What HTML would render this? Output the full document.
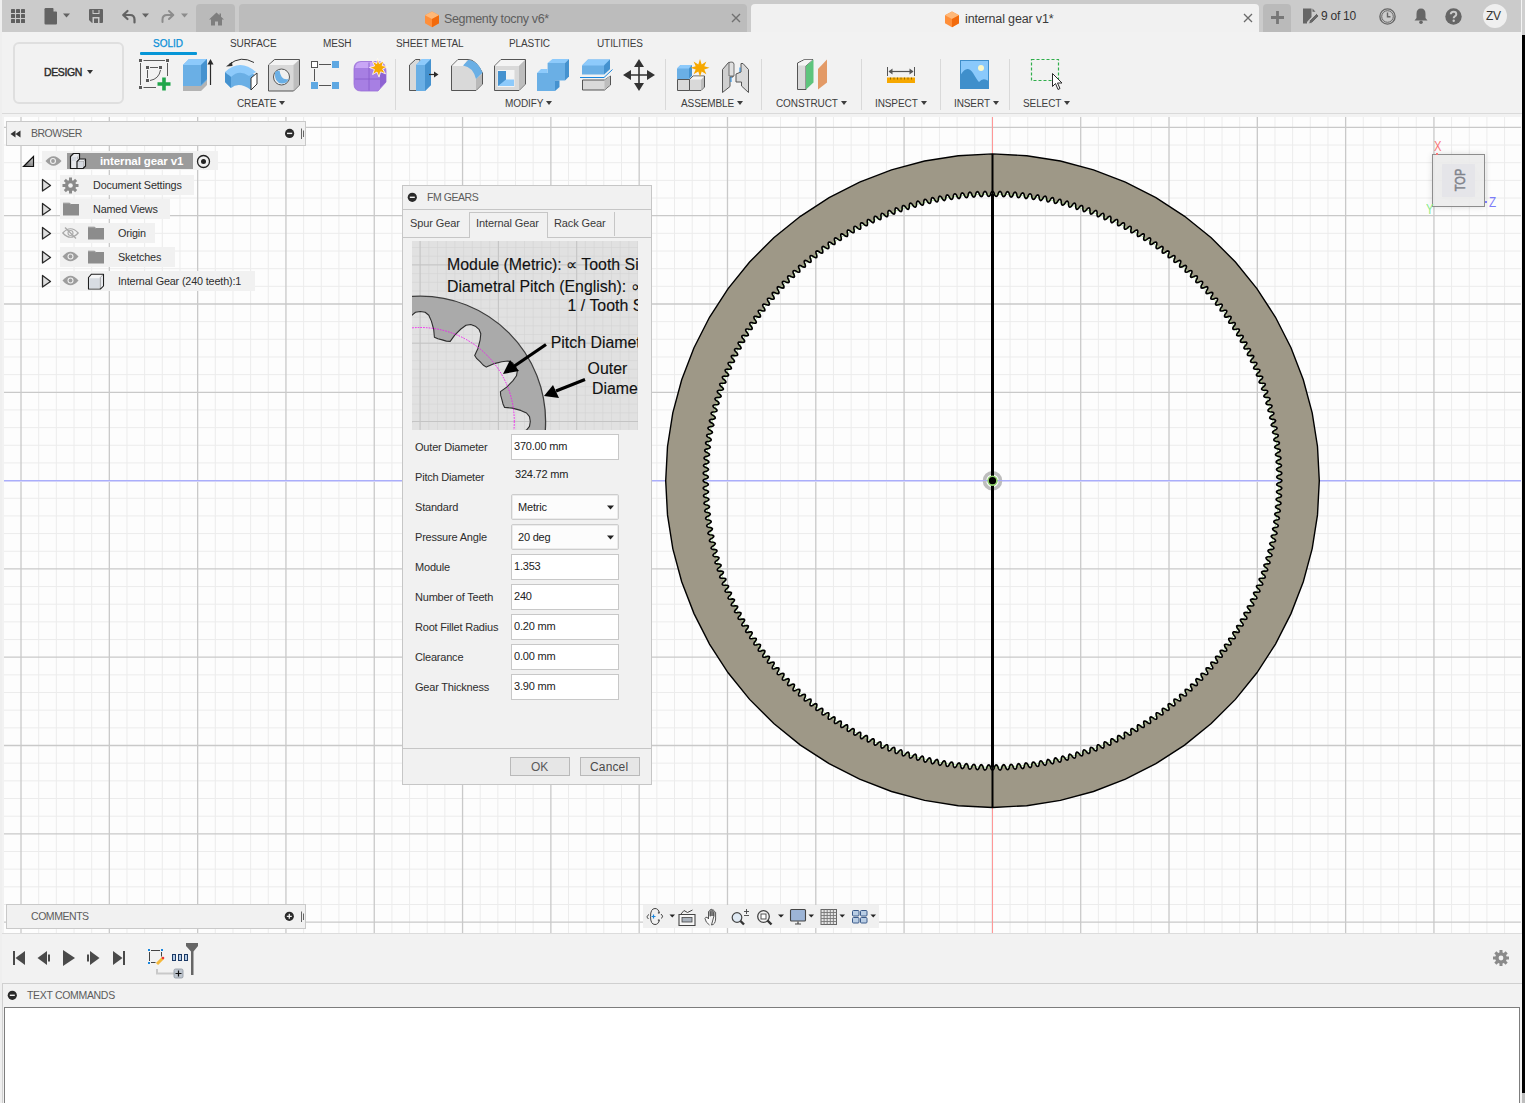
<!DOCTYPE html>
<html><head><meta charset="utf-8">
<style>
*{box-sizing:border-box}
html,body{margin:0;padding:0}
body{width:1525px;height:1103px;position:relative;overflow:hidden;background:#f2f2f2;font-family:"Liberation Sans",sans-serif;color:#3c3c3c}
.a{position:absolute}
.t{position:absolute;white-space:nowrap;line-height:1}
svg{display:block}
.tab{position:absolute;top:4px;height:28px;border-radius:4px 4px 0 0}
.lbl{position:absolute;white-space:nowrap;font-size:10px;line-height:12px;color:#3d3d3d}
.sep{position:absolute;top:59px;width:1px;height:51px;background:#d9d9d9}
.tri{display:inline-block;width:0;height:0;border-left:3.5px solid transparent;border-right:3.5px solid transparent;border-top:4px solid #3d3d3d;vertical-align:middle;margin-left:3px;position:relative;top:-1px}
</style></head><body>
<!-- viewport -->
<svg width="1517" height="816" viewBox="4 117 1517 816" style="position:absolute;left:4px;top:117px;display:block">
<rect x="4" y="117" width="1517" height="816" fill="#fdfdfd"/>
<path d="M38.68 117V933M56.35 117V933M74.01 117V933M91.67 117V933M126.99 117V933M144.65 117V933M162.31 117V933M179.98 117V933M215.3 117V933M232.96 117V933M250.62 117V933M268.28 117V933M303.61 117V933M321.27 117V933M338.93 117V933M356.59 117V933M391.91 117V933M409.57 117V933M427.24 117V933M444.9 117V933M480.22 117V933M497.88 117V933M515.54 117V933M533.2 117V933M568.53 117V933M586.19 117V933M603.85 117V933M621.51 117V933M656.83 117V933M4 145.03H1521M674.49 117V933M4 162.69H1521M692.16 117V933M4 180.36H1521M709.82 117V933M4 198.02H1521M745.14 117V933M4 233.34H1521M762.8 117V933M4 251.0H1521M780.46 117V933M4 268.66H1521M798.12 117V933M4 286.32H1521M833.45 117V933M4 321.65H1521M851.11 117V933M4 339.31H1521M868.77 117V933M4 356.97H1521M886.43 117V933M4 374.63H1521M921.75 117V933M4 409.95H1521M939.42 117V933M4 427.62H1521M957.08 117V933M4 445.28H1521M974.74 117V933M4 462.94H1521M1010.06 117V933M4 498.26H1521M1027.72 117V933M4 515.92H1521M1045.38 117V933M4 533.58H1521M1063.05 117V933M4 551.25H1521M1098.37 117V933M4 586.57H1521M1116.03 117V933M4 604.23H1521M1133.69 117V933M4 621.89H1521M1151.35 117V933M4 639.55H1521M1186.68 117V933M4 674.88H1521M1204.34 117V933M4 692.54H1521M1222.0 117V933M4 710.2H1521M1239.66 117V933M4 727.86H1521M1274.98 117V933M4 763.18H1521M1292.64 117V933M4 780.84H1521M1310.31 117V933M4 798.51H1521M1327.97 117V933M4 816.17H1521M1363.29 117V933M4 851.49H1521M1380.95 117V933M4 869.15H1521M1398.61 117V933M4 886.81H1521M1416.27 117V933M4 904.47H1521M1451.6 117V933M1469.26 117V933M1486.92 117V933M1504.58 117V933" stroke="#ececec" stroke-width="1" fill="none"/>
<path d="M21.02 117V933M109.33 117V933M197.64 117V933M285.94 117V933M374.25 117V933M462.56 117V933M550.87 117V933M639.17 117V933M4 127.37H1521M727.48 117V933M4 215.68H1521M815.79 117V933M4 303.99H1521M904.09 117V933M4 392.29H1521M992.4 117V933M4 480.6H1521M1080.71 117V933M4 568.91H1521M1169.01 117V933M4 657.21H1521M1257.32 117V933M4 745.52H1521M1345.63 117V933M4 833.83H1521M1433.93 117V933M4 922.13H1521" stroke="#c9c9c9" stroke-width="1.3" fill="none"/>
<path d="M4 480.5H1521" stroke="#aaaefb" stroke-width="1"/>
<path d="M4 481.5H1521" stroke="#d3d3f9" stroke-width="1"/>
<path d="M992.5 117V933" stroke="#ff9797" stroke-width="1"/>
</svg>
<svg width="1517" height="816" viewBox="4 117 1517 816" style="position:absolute;left:4px;top:117px;display:block">
<path d="M992.5 153.9L1026.7 155.7L1060.4 161.0L1093.5 169.9L1125.4 182.2L1155.9 197.7L1184.6 216.3L1211.2 237.8L1235.4 262.0L1256.9 288.6L1275.5 317.3L1291.0 347.8L1303.3 379.7L1312.2 412.8L1317.5 446.5L1319.3 480.7L1317.5 514.9L1312.2 548.6L1303.3 581.7L1291.0 613.6L1275.5 644.1L1256.9 672.8L1235.4 699.4L1211.2 723.6L1184.6 745.1L1155.9 763.7L1125.4 779.2L1093.5 791.5L1060.4 800.4L1026.7 805.7L992.5 807.5L958.3 805.7L924.6 800.4L891.5 791.5L859.6 779.2L829.1 763.7L800.4 745.1L773.8 723.6L749.6 699.4L728.1 672.8L709.5 644.1L694.0 613.6L681.7 581.7L672.8 548.6L667.5 514.9L665.7 480.7L667.5 446.5L672.8 412.8L681.7 379.7L694.0 347.8L709.5 317.3L728.1 288.6L749.6 262.0L773.8 237.8L800.4 216.3L829.1 197.7L859.6 182.2L891.5 169.9L924.6 161.0L958.3 155.7ZM992.5 191.3L993.3 191.7L994.0 192.8L994.7 195.1L995.5 196.2L996.2 196.5L997.0 196.2L997.7 195.1L998.5 192.8L999.3 191.7L1000.1 191.4L1000.8 191.8L1001.5 192.9L1002.2 195.2L1002.9 196.3L1003.7 196.7L1004.4 196.4L1005.2 195.3L1006.1 193.1L1006.9 192.0L1007.6 191.7L1008.4 192.1L1009.1 193.2L1009.7 195.6L1010.4 196.7L1011.1 197.1L1011.9 196.8L1012.7 195.8L1013.6 193.5L1014.4 192.5L1015.2 192.2L1015.9 192.6L1016.6 193.8L1017.1 196.1L1017.8 197.3L1018.5 197.7L1019.3 197.4L1020.1 196.4L1021.1 194.2L1022.0 193.2L1022.8 192.9L1023.5 193.3L1024.1 194.5L1024.6 196.9L1025.2 198.0L1025.9 198.5L1026.7 198.2L1027.6 197.2L1028.6 195.0L1029.5 194.0L1030.3 193.8L1031.0 194.2L1031.6 195.4L1032.0 197.8L1032.6 199.0L1033.3 199.4L1034.1 199.2L1035.0 198.2L1036.1 196.1L1037.0 195.1L1037.8 194.9L1038.5 195.3L1039.0 196.5L1039.4 198.9L1040.0 200.1L1040.6 200.6L1041.4 200.4L1042.3 199.4L1043.5 197.3L1044.4 196.4L1045.2 196.1L1045.9 196.6L1046.5 197.9L1046.8 200.2L1047.3 201.5L1047.9 202.0L1048.7 201.8L1049.7 200.8L1050.9 198.7L1051.9 197.8L1052.7 197.6L1053.3 198.1L1053.8 199.4L1054.1 201.8L1054.6 203.0L1055.2 203.5L1056.0 203.3L1057.0 202.4L1058.3 200.4L1059.2 199.5L1060.1 199.3L1060.7 199.8L1061.2 201.1L1061.4 203.5L1061.8 204.7L1062.5 205.2L1063.3 205.1L1064.3 204.2L1065.6 202.2L1066.6 201.3L1067.4 201.2L1068.0 201.7L1068.5 203.0L1068.6 205.4L1069.0 206.6L1069.6 207.2L1070.5 207.0L1071.5 206.2L1072.8 204.2L1073.9 203.3L1074.7 203.2L1075.3 203.8L1075.7 205.0L1075.8 207.5L1076.2 208.7L1076.8 209.3L1077.6 209.2L1078.6 208.3L1080.0 206.4L1081.1 205.6L1081.9 205.5L1082.5 206.0L1082.9 207.3L1082.9 209.7L1083.3 211.0L1083.9 211.6L1084.7 211.5L1085.7 210.7L1087.2 208.8L1088.3 208.0L1089.1 207.9L1089.7 208.5L1090.0 209.8L1090.0 212.2L1090.3 213.5L1090.9 214.1L1091.7 214.0L1092.8 213.2L1094.3 211.3L1095.4 210.6L1096.2 210.5L1096.8 211.1L1097.1 212.4L1097.0 214.8L1097.3 216.1L1097.8 216.7L1098.6 216.7L1099.7 215.9L1101.3 214.1L1102.4 213.4L1103.2 213.3L1103.8 214.0L1104.1 215.3L1103.9 217.7L1104.1 219.0L1104.7 219.6L1105.5 219.5L1106.6 218.8L1108.2 217.0L1109.4 216.3L1110.2 216.3L1110.8 217.0L1111.0 218.3L1110.7 220.7L1111.0 222.0L1111.5 222.6L1112.3 222.6L1113.4 221.9L1115.1 220.2L1116.3 219.5L1117.1 219.5L1117.6 220.1L1117.8 221.5L1117.5 223.8L1117.7 225.2L1118.2 225.8L1119.0 225.8L1120.2 225.2L1121.9 223.5L1123.0 222.8L1123.9 222.8L1124.4 223.5L1124.6 224.8L1124.2 227.2L1124.3 228.5L1124.8 229.2L1125.7 229.2L1126.8 228.6L1128.6 226.9L1129.8 226.3L1130.6 226.4L1131.1 227.0L1131.2 228.4L1130.8 230.7L1130.9 232.1L1131.4 232.7L1132.2 232.8L1133.4 232.2L1135.2 230.6L1136.4 230.0L1137.2 230.1L1137.7 230.8L1137.8 232.1L1137.3 234.4L1137.4 235.8L1137.8 236.5L1138.6 236.5L1139.8 236.0L1141.7 234.4L1142.9 233.9L1143.7 233.9L1144.2 234.6L1144.2 236.0L1143.7 238.3L1143.7 239.6L1144.2 240.3L1145.0 240.4L1146.2 239.9L1148.1 238.4L1149.3 237.9L1150.1 238.0L1150.6 238.7L1150.6 240.0L1150.0 242.4L1150.0 243.7L1150.4 244.4L1151.2 244.5L1152.4 244.0L1154.3 242.5L1155.6 242.1L1156.4 242.2L1156.8 242.9L1156.8 244.3L1156.1 246.6L1156.1 247.9L1156.5 248.6L1157.3 248.7L1158.6 248.3L1160.5 246.9L1161.8 246.4L1162.6 246.6L1163.0 247.3L1163.0 248.6L1162.2 250.9L1162.2 252.3L1162.5 253.0L1163.4 253.1L1164.6 252.7L1166.6 251.3L1167.9 250.9L1168.7 251.1L1169.1 251.8L1169.0 253.2L1168.2 255.4L1168.1 256.8L1168.4 257.5L1169.3 257.7L1170.5 257.3L1172.5 256.0L1173.8 255.6L1174.6 255.8L1175.0 256.5L1174.9 257.9L1174.0 260.1L1173.9 261.4L1174.2 262.2L1175.0 262.4L1176.3 262.0L1178.4 260.8L1179.6 260.4L1180.5 260.6L1180.8 261.4L1180.6 262.7L1179.7 264.9L1179.6 266.3L1179.9 267.0L1180.7 267.2L1182.0 266.9L1184.0 265.7L1185.3 265.4L1186.1 265.6L1186.5 266.4L1186.3 267.7L1185.3 269.9L1185.1 271.2L1185.4 272.0L1186.2 272.2L1187.5 272.0L1189.6 270.8L1190.9 270.5L1191.7 270.8L1192.0 271.6L1191.8 272.9L1190.8 275.0L1190.5 276.4L1190.8 277.1L1191.6 277.4L1192.9 277.1L1195.0 276.0L1196.3 275.8L1197.1 276.1L1197.4 276.9L1197.2 278.2L1196.1 280.3L1195.8 281.6L1196.1 282.4L1196.8 282.7L1198.2 282.4L1200.3 281.4L1201.6 281.2L1202.4 281.5L1202.7 282.3L1202.4 283.6L1201.2 285.7L1201.0 287.0L1201.2 287.8L1202.0 288.1L1203.3 287.9L1205.5 286.9L1206.8 286.7L1207.6 287.1L1207.8 287.9L1207.5 289.2L1206.3 291.2L1206.0 292.5L1206.2 293.3L1206.9 293.6L1208.3 293.5L1210.5 292.6L1211.8 292.4L1212.6 292.7L1212.8 293.6L1212.4 294.8L1211.2 296.9L1210.8 298.2L1211.0 299.0L1211.8 299.3L1213.1 299.2L1215.3 298.3L1216.7 298.2L1217.4 298.6L1217.6 299.4L1217.2 300.7L1215.9 302.7L1215.5 303.9L1215.7 304.8L1216.4 305.1L1217.8 305.0L1220.0 304.2L1221.4 304.1L1222.1 304.5L1222.3 305.3L1221.9 306.6L1220.5 308.6L1220.1 309.8L1220.2 310.7L1220.9 311.0L1222.3 311.0L1224.6 310.2L1225.9 310.2L1226.6 310.6L1226.8 311.4L1226.3 312.7L1224.9 314.6L1224.5 315.9L1224.6 316.7L1225.3 317.1L1226.6 317.1L1228.9 316.4L1230.3 316.4L1231.0 316.8L1231.1 317.6L1230.7 318.9L1229.2 320.8L1228.7 322.0L1228.8 322.8L1229.5 323.2L1230.8 323.2L1233.2 322.6L1234.5 322.6L1235.2 323.1L1235.3 323.9L1234.8 325.1L1233.3 327.0L1232.8 328.2L1232.9 329.0L1233.6 329.5L1234.9 329.5L1237.2 329.0L1238.6 329.0L1239.3 329.5L1239.3 330.3L1238.8 331.5L1237.2 333.4L1236.7 334.6L1236.7 335.4L1237.4 335.8L1238.8 335.9L1241.1 335.4L1242.4 335.5L1243.1 336.0L1243.2 336.8L1242.6 338.0L1241.0 339.8L1240.4 341.0L1240.5 341.8L1241.1 342.3L1242.5 342.4L1244.8 342.0L1246.2 342.1L1246.8 342.6L1246.9 343.4L1246.3 344.6L1244.6 346.4L1244.0 347.5L1244.0 348.4L1244.7 348.9L1246.0 349.0L1248.4 348.6L1249.7 348.8L1250.4 349.3L1250.4 350.2L1249.7 351.3L1248.0 353.0L1247.4 354.2L1247.4 355.0L1248.0 355.5L1249.4 355.7L1251.7 355.4L1253.1 355.6L1253.7 356.1L1253.7 356.9L1253.0 358.1L1251.3 359.8L1250.6 360.9L1250.6 361.7L1251.2 362.2L1252.5 362.5L1254.9 362.2L1256.2 362.4L1256.9 363.0L1256.9 363.8L1256.2 365.0L1254.4 366.6L1253.7 367.7L1253.6 368.5L1254.2 369.1L1255.5 369.3L1257.9 369.1L1259.2 369.4L1259.9 370.0L1259.8 370.8L1259.1 371.9L1257.3 373.5L1256.5 374.6L1256.5 375.4L1257.1 375.9L1258.4 376.2L1260.8 376.1L1262.1 376.4L1262.7 377.0L1262.6 377.8L1261.9 378.9L1260.0 380.4L1259.2 381.5L1259.1 382.3L1259.7 382.9L1261.0 383.2L1263.4 383.2L1264.7 383.5L1265.3 384.1L1265.2 384.9L1264.4 386.0L1262.5 387.5L1261.7 388.5L1261.6 389.3L1262.2 389.9L1263.5 390.3L1265.9 390.3L1267.2 390.7L1267.7 391.3L1267.6 392.1L1266.8 393.2L1264.9 394.6L1264.0 395.6L1263.9 396.4L1264.5 397.0L1265.7 397.4L1268.2 397.5L1269.4 397.9L1270.0 398.5L1269.9 399.3L1269.0 400.4L1267.0 401.7L1266.2 402.7L1266.0 403.6L1266.6 404.2L1267.8 404.6L1270.2 404.7L1271.5 405.2L1272.0 405.8L1271.9 406.6L1271.0 407.6L1269.0 408.9L1268.1 409.9L1268.0 410.7L1268.5 411.4L1269.7 411.8L1272.1 412.0L1273.4 412.5L1273.9 413.1L1273.7 414.0L1272.8 414.9L1270.8 416.2L1269.9 417.2L1269.7 418.0L1270.2 418.6L1271.4 419.1L1273.8 419.4L1275.1 419.9L1275.6 420.5L1275.4 421.3L1274.5 422.3L1272.4 423.5L1271.4 424.5L1271.2 425.3L1271.7 425.9L1273.0 426.4L1275.3 426.7L1276.6 427.3L1277.1 428.0L1276.8 428.8L1275.9 429.7L1273.8 430.9L1272.8 431.8L1272.6 432.6L1273.1 433.2L1274.3 433.8L1276.7 434.2L1277.9 434.7L1278.3 435.4L1278.1 436.2L1277.1 437.1L1275.0 438.2L1274.0 439.1L1273.8 439.9L1274.2 440.6L1275.4 441.2L1277.8 441.6L1279.0 442.2L1279.4 442.9L1279.2 443.7L1278.2 444.6L1276.0 445.6L1275.0 446.5L1274.7 447.3L1275.2 448.0L1276.3 448.6L1278.7 449.1L1279.9 449.7L1280.3 450.4L1280.0 451.2L1279.0 452.1L1276.8 453.1L1275.8 453.9L1275.5 454.7L1275.9 455.4L1277.1 456.1L1279.4 456.6L1280.6 457.3L1281.0 458.0L1280.7 458.8L1279.7 459.6L1277.4 460.5L1276.4 461.3L1276.1 462.1L1276.5 462.8L1277.6 463.5L1280.0 464.1L1281.1 464.8L1281.5 465.6L1281.2 466.3L1280.1 467.1L1277.9 468.0L1276.8 468.8L1276.5 469.5L1276.9 470.3L1278.0 471.0L1280.3 471.7L1281.4 472.4L1281.8 473.1L1281.5 473.9L1280.4 474.7L1278.1 475.5L1277.0 476.2L1276.7 477.0L1277.0 477.7L1278.1 478.5L1280.4 479.2L1281.5 479.9L1281.9 480.7L1281.5 481.5L1280.4 482.2L1278.1 482.9L1277.0 483.7L1276.7 484.4L1277.0 485.2L1278.1 485.9L1280.4 486.7L1281.5 487.5L1281.8 488.3L1281.4 489.0L1280.3 489.7L1278.0 490.4L1276.9 491.1L1276.5 491.9L1276.8 492.6L1277.9 493.4L1280.1 494.3L1281.2 495.1L1281.5 495.8L1281.1 496.6L1280.0 497.3L1277.6 497.9L1276.5 498.6L1276.1 499.3L1276.4 500.1L1277.4 500.9L1279.7 501.8L1280.7 502.6L1281.0 503.4L1280.6 504.1L1279.4 504.8L1277.1 505.3L1275.9 506.0L1275.5 506.7L1275.8 507.5L1276.8 508.3L1279.0 509.3L1280.0 510.2L1280.3 511.0L1279.9 511.7L1278.7 512.3L1276.3 512.8L1275.2 513.4L1274.7 514.1L1275.0 514.9L1276.0 515.8L1278.2 516.8L1279.2 517.7L1279.4 518.5L1279.0 519.2L1277.8 519.8L1275.4 520.2L1274.2 520.8L1273.8 521.5L1274.0 522.3L1275.0 523.2L1277.1 524.3L1278.1 525.2L1278.3 526.0L1277.9 526.7L1276.7 527.2L1274.3 527.6L1273.1 528.2L1272.6 528.8L1272.8 529.6L1273.8 530.5L1275.9 531.7L1276.8 532.6L1277.1 533.4L1276.6 534.1L1275.3 534.7L1273.0 535.0L1271.7 535.5L1271.2 536.1L1271.4 536.9L1272.4 537.9L1274.5 539.1L1275.4 540.1L1275.6 540.9L1275.1 541.5L1273.8 542.0L1271.4 542.3L1270.2 542.8L1269.7 543.4L1269.9 544.2L1270.8 545.2L1272.8 546.5L1273.7 547.4L1273.9 548.3L1273.4 548.9L1272.1 549.4L1269.7 549.6L1268.5 550.0L1268.0 550.7L1268.1 551.5L1269.0 552.5L1271.0 553.8L1271.9 554.8L1272.0 555.6L1271.5 556.2L1270.2 556.7L1267.8 556.8L1266.6 557.2L1266.0 557.8L1266.2 558.7L1267.0 559.7L1269.0 561.0L1269.9 562.1L1270.0 562.9L1269.4 563.5L1268.2 563.9L1265.7 564.0L1264.5 564.4L1263.9 565.0L1264.0 565.8L1264.9 566.8L1266.8 568.2L1267.6 569.3L1267.7 570.1L1267.2 570.7L1265.9 571.1L1263.5 571.1L1262.2 571.5L1261.6 572.1L1261.7 572.9L1262.5 573.9L1264.4 575.4L1265.2 576.5L1265.3 577.3L1264.7 577.9L1263.4 578.2L1261.0 578.2L1259.7 578.5L1259.1 579.1L1259.2 579.9L1260.0 581.0L1261.9 582.5L1262.6 583.6L1262.7 584.4L1262.1 585.0L1260.8 585.3L1258.4 585.2L1257.1 585.5L1256.5 586.0L1256.5 586.8L1257.3 587.9L1259.1 589.5L1259.8 590.6L1259.9 591.4L1259.2 592.0L1257.9 592.3L1255.5 592.1L1254.2 592.3L1253.6 592.9L1253.7 593.7L1254.4 594.8L1256.2 596.4L1256.9 597.6L1256.9 598.4L1256.2 599.0L1254.9 599.2L1252.5 598.9L1251.2 599.2L1250.6 599.7L1250.6 600.5L1251.3 601.6L1253.0 603.3L1253.7 604.5L1253.7 605.3L1253.1 605.8L1251.7 606.0L1249.4 605.7L1248.0 605.9L1247.4 606.4L1247.4 607.2L1248.0 608.4L1249.7 610.1L1250.4 611.2L1250.4 612.1L1249.7 612.6L1248.4 612.8L1246.0 612.4L1244.7 612.5L1244.0 613.0L1244.0 613.9L1244.6 615.0L1246.3 616.8L1246.9 618.0L1246.8 618.8L1246.2 619.3L1244.8 619.4L1242.5 619.0L1241.1 619.1L1240.5 619.6L1240.4 620.4L1241.0 621.6L1242.6 623.4L1243.2 624.6L1243.1 625.4L1242.4 625.9L1241.1 626.0L1238.8 625.5L1237.4 625.6L1236.7 626.0L1236.7 626.8L1237.2 628.0L1238.8 629.9L1239.3 631.1L1239.3 631.9L1238.6 632.4L1237.2 632.4L1234.9 631.9L1233.6 631.9L1232.9 632.4L1232.8 633.2L1233.3 634.4L1234.8 636.3L1235.3 637.5L1235.2 638.3L1234.5 638.8L1233.2 638.8L1230.8 638.2L1229.5 638.2L1228.8 638.6L1228.7 639.4L1229.2 640.6L1230.7 642.5L1231.1 643.8L1231.0 644.6L1230.3 645.0L1228.9 645.0L1226.6 644.3L1225.3 644.3L1224.6 644.7L1224.5 645.5L1224.9 646.8L1226.3 648.7L1226.8 650.0L1226.6 650.8L1225.9 651.2L1224.6 651.2L1222.3 650.4L1220.9 650.4L1220.2 650.7L1220.1 651.6L1220.5 652.8L1221.9 654.8L1222.3 656.1L1222.1 656.9L1221.4 657.3L1220.0 657.2L1217.8 656.4L1216.4 656.3L1215.7 656.6L1215.5 657.5L1215.9 658.7L1217.2 660.7L1217.6 662.0L1217.4 662.8L1216.7 663.2L1215.3 663.1L1213.1 662.2L1211.8 662.1L1211.0 662.4L1210.8 663.2L1211.2 664.5L1212.4 666.6L1212.8 667.8L1212.6 668.7L1211.8 669.0L1210.5 668.8L1208.3 667.9L1206.9 667.8L1206.2 668.1L1206.0 668.9L1206.3 670.2L1207.5 672.2L1207.8 673.5L1207.6 674.3L1206.8 674.7L1205.5 674.5L1203.3 673.5L1202.0 673.3L1201.2 673.6L1201.0 674.4L1201.2 675.7L1202.4 677.8L1202.7 679.1L1202.4 679.9L1201.6 680.2L1200.3 680.0L1198.2 679.0L1196.8 678.7L1196.1 679.0L1195.8 679.8L1196.1 681.1L1197.2 683.2L1197.4 684.5L1197.1 685.3L1196.3 685.6L1195.0 685.4L1192.9 684.3L1191.6 684.0L1190.8 684.3L1190.5 685.0L1190.8 686.4L1191.8 688.5L1192.0 689.8L1191.7 690.6L1190.9 690.9L1189.6 690.6L1187.5 689.4L1186.2 689.2L1185.4 689.4L1185.1 690.2L1185.3 691.5L1186.3 693.7L1186.5 695.0L1186.1 695.8L1185.3 696.0L1184.0 695.7L1182.0 694.5L1180.7 694.2L1179.9 694.4L1179.6 695.1L1179.7 696.5L1180.6 698.7L1180.8 700.0L1180.5 700.8L1179.6 701.0L1178.4 700.6L1176.3 699.4L1175.0 699.0L1174.2 699.2L1173.9 700.0L1174.0 701.3L1174.9 703.5L1175.0 704.9L1174.6 705.6L1173.8 705.8L1172.5 705.4L1170.5 704.1L1169.3 703.7L1168.4 703.9L1168.1 704.6L1168.2 706.0L1169.0 708.2L1169.1 709.6L1168.7 710.3L1167.9 710.5L1166.6 710.1L1164.6 708.7L1163.4 708.3L1162.5 708.4L1162.2 709.1L1162.2 710.5L1163.0 712.8L1163.0 714.1L1162.6 714.8L1161.8 715.0L1160.5 714.5L1158.6 713.1L1157.3 712.7L1156.5 712.8L1156.1 713.5L1156.1 714.8L1156.8 717.1L1156.8 718.5L1156.4 719.2L1155.6 719.3L1154.3 718.9L1152.4 717.4L1151.2 716.9L1150.4 717.0L1150.0 717.7L1150.0 719.0L1150.6 721.4L1150.6 722.7L1150.1 723.4L1149.3 723.5L1148.1 723.0L1146.2 721.5L1145.0 721.0L1144.2 721.1L1143.7 721.8L1143.7 723.1L1144.2 725.4L1144.2 726.8L1143.7 727.5L1142.9 727.5L1141.7 727.0L1139.8 725.4L1138.6 724.9L1137.8 724.9L1137.4 725.6L1137.3 727.0L1137.8 729.3L1137.7 730.6L1137.2 731.3L1136.4 731.4L1135.2 730.8L1133.4 729.2L1132.2 728.6L1131.4 728.7L1130.9 729.3L1130.8 730.7L1131.2 733.0L1131.1 734.4L1130.6 735.0L1129.8 735.1L1128.6 734.5L1126.8 732.8L1125.7 732.2L1124.8 732.2L1124.3 732.9L1124.2 734.2L1124.6 736.6L1124.4 737.9L1123.9 738.6L1123.0 738.6L1121.9 737.9L1120.2 736.2L1119.0 735.6L1118.2 735.6L1117.7 736.2L1117.5 737.6L1117.8 739.9L1117.6 741.3L1117.1 741.9L1116.3 741.9L1115.1 741.2L1113.4 739.5L1112.3 738.8L1111.5 738.8L1111.0 739.4L1110.7 740.7L1111.0 743.1L1110.8 744.4L1110.2 745.1L1109.4 745.1L1108.2 744.4L1106.6 742.6L1105.5 741.9L1104.7 741.8L1104.1 742.4L1103.9 743.7L1104.1 746.1L1103.8 747.4L1103.2 748.1L1102.4 748.0L1101.3 747.3L1099.7 745.5L1098.6 744.7L1097.8 744.7L1097.3 745.3L1097.0 746.6L1097.1 749.0L1096.8 750.3L1096.2 750.9L1095.4 750.8L1094.3 750.1L1092.8 748.2L1091.7 747.4L1090.9 747.3L1090.3 747.9L1090.0 749.2L1090.0 751.6L1089.7 752.9L1089.1 753.5L1088.3 753.4L1087.2 752.6L1085.7 750.7L1084.7 749.9L1083.9 749.8L1083.3 750.4L1082.9 751.7L1082.9 754.1L1082.5 755.4L1081.9 755.9L1081.1 755.8L1080.0 755.0L1078.6 753.1L1077.6 752.2L1076.8 752.1L1076.2 752.7L1075.8 753.9L1075.7 756.4L1075.3 757.6L1074.7 758.2L1073.9 758.1L1072.8 757.2L1071.5 755.2L1070.5 754.4L1069.6 754.2L1069.0 754.8L1068.6 756.0L1068.5 758.4L1068.0 759.7L1067.4 760.2L1066.6 760.1L1065.6 759.2L1064.3 757.2L1063.3 756.3L1062.5 756.2L1061.8 756.7L1061.4 757.9L1061.2 760.3L1060.7 761.6L1060.1 762.1L1059.2 761.9L1058.3 761.0L1057.0 759.0L1056.0 758.1L1055.2 757.9L1054.6 758.4L1054.1 759.6L1053.8 762.0L1053.3 763.3L1052.7 763.8L1051.9 763.6L1050.9 762.7L1049.7 760.6L1048.7 759.6L1047.9 759.4L1047.3 759.9L1046.8 761.2L1046.5 763.5L1045.9 764.8L1045.2 765.3L1044.4 765.0L1043.5 764.1L1042.3 762.0L1041.4 761.0L1040.6 760.8L1040.0 761.3L1039.4 762.5L1039.0 764.9L1038.5 766.1L1037.8 766.5L1037.0 766.3L1036.1 765.3L1035.0 763.2L1034.1 762.2L1033.3 762.0L1032.6 762.4L1032.0 763.6L1031.6 766.0L1031.0 767.2L1030.3 767.6L1029.5 767.4L1028.6 766.4L1027.6 764.2L1026.7 763.2L1025.9 762.9L1025.2 763.4L1024.6 764.5L1024.1 766.9L1023.5 768.1L1022.8 768.5L1022.0 768.2L1021.1 767.2L1020.1 765.0L1019.3 764.0L1018.5 763.7L1017.8 764.1L1017.1 765.3L1016.6 767.6L1015.9 768.8L1015.2 769.2L1014.4 768.9L1013.6 767.9L1012.7 765.6L1011.9 764.6L1011.1 764.3L1010.4 764.7L1009.7 765.8L1009.1 768.2L1008.4 769.3L1007.6 769.7L1006.9 769.4L1006.1 768.3L1005.2 766.1L1004.4 765.0L1003.7 764.7L1002.9 765.1L1002.2 766.2L1001.5 768.5L1000.8 769.6L1000.1 770.0L999.3 769.7L998.5 768.6L997.7 766.3L997.0 765.2L996.2 764.9L995.5 765.2L994.7 766.3L994.0 768.6L993.3 769.7L992.5 770.1L991.7 769.7L991.0 768.6L990.3 766.3L989.5 765.2L988.8 764.9L988.0 765.2L987.3 766.3L986.5 768.6L985.7 769.7L984.9 770.0L984.2 769.6L983.5 768.5L982.8 766.2L982.1 765.1L981.3 764.7L980.6 765.0L979.8 766.1L978.9 768.3L978.1 769.4L977.4 769.7L976.6 769.3L975.9 768.2L975.3 765.8L974.6 764.7L973.9 764.3L973.1 764.6L972.3 765.6L971.4 767.9L970.6 768.9L969.8 769.2L969.1 768.8L968.4 767.6L967.9 765.3L967.2 764.1L966.5 763.7L965.7 764.0L964.9 765.0L963.9 767.2L963.0 768.2L962.2 768.5L961.5 768.1L960.9 766.9L960.4 764.5L959.8 763.4L959.1 762.9L958.3 763.2L957.4 764.2L956.4 766.4L955.5 767.4L954.7 767.6L954.0 767.2L953.4 766.0L953.0 763.6L952.4 762.4L951.7 762.0L950.9 762.2L950.0 763.2L948.9 765.3L948.0 766.3L947.2 766.5L946.5 766.1L946.0 764.9L945.6 762.5L945.0 761.3L944.4 760.8L943.6 761.0L942.7 762.0L941.5 764.1L940.6 765.0L939.8 765.3L939.1 764.8L938.5 763.5L938.2 761.2L937.7 759.9L937.1 759.4L936.3 759.6L935.3 760.6L934.1 762.7L933.1 763.6L932.3 763.8L931.7 763.3L931.2 762.0L930.9 759.6L930.4 758.4L929.8 757.9L929.0 758.1L928.0 759.0L926.7 761.0L925.8 761.9L924.9 762.1L924.3 761.6L923.8 760.3L923.6 757.9L923.2 756.7L922.5 756.2L921.7 756.3L920.7 757.2L919.4 759.2L918.4 760.1L917.6 760.2L917.0 759.7L916.5 758.4L916.4 756.0L916.0 754.8L915.4 754.2L914.5 754.4L913.5 755.2L912.2 757.2L911.1 758.1L910.3 758.2L909.7 757.6L909.3 756.4L909.2 753.9L908.8 752.7L908.2 752.1L907.4 752.2L906.4 753.1L905.0 755.0L903.9 755.8L903.1 755.9L902.5 755.4L902.1 754.1L902.1 751.7L901.7 750.4L901.1 749.8L900.3 749.9L899.3 750.7L897.8 752.6L896.7 753.4L895.9 753.5L895.3 752.9L895.0 751.6L895.0 749.2L894.7 747.9L894.1 747.3L893.3 747.4L892.2 748.2L890.7 750.1L889.6 750.8L888.8 750.9L888.2 750.3L887.9 749.0L888.0 746.6L887.7 745.3L887.2 744.7L886.4 744.7L885.3 745.5L883.7 747.3L882.6 748.0L881.8 748.1L881.2 747.4L880.9 746.1L881.1 743.7L880.9 742.4L880.3 741.8L879.5 741.9L878.4 742.6L876.8 744.4L875.6 745.1L874.8 745.1L874.2 744.4L874.0 743.1L874.3 740.7L874.0 739.4L873.5 738.8L872.7 738.8L871.6 739.5L869.9 741.2L868.7 741.9L867.9 741.9L867.4 741.3L867.2 739.9L867.5 737.6L867.3 736.2L866.8 735.6L866.0 735.6L864.8 736.2L863.1 737.9L862.0 738.6L861.1 738.6L860.6 737.9L860.4 736.6L860.8 734.2L860.7 732.9L860.2 732.2L859.3 732.2L858.2 732.8L856.4 734.5L855.2 735.1L854.4 735.0L853.9 734.4L853.8 733.0L854.2 730.7L854.1 729.3L853.6 728.7L852.8 728.6L851.6 729.2L849.8 730.8L848.6 731.4L847.8 731.3L847.3 730.6L847.2 729.3L847.7 727.0L847.6 725.6L847.2 724.9L846.4 724.9L845.2 725.4L843.3 727.0L842.1 727.5L841.3 727.5L840.8 726.8L840.8 725.4L841.3 723.1L841.3 721.8L840.8 721.1L840.0 721.0L838.8 721.5L836.9 723.0L835.7 723.5L834.9 723.4L834.4 722.7L834.4 721.4L835.0 719.0L835.0 717.7L834.6 717.0L833.8 716.9L832.6 717.4L830.7 718.9L829.4 719.3L828.6 719.2L828.2 718.5L828.2 717.1L828.9 714.8L828.9 713.5L828.5 712.8L827.7 712.7L826.4 713.1L824.5 714.5L823.2 715.0L822.4 714.8L822.0 714.1L822.0 712.8L822.8 710.5L822.8 709.1L822.5 708.4L821.6 708.3L820.4 708.7L818.4 710.1L817.1 710.5L816.3 710.3L815.9 709.6L816.0 708.2L816.8 706.0L816.9 704.6L816.6 703.9L815.7 703.7L814.5 704.1L812.5 705.4L811.2 705.8L810.4 705.6L810.0 704.9L810.1 703.5L811.0 701.3L811.1 700.0L810.8 699.2L810.0 699.0L808.7 699.4L806.6 700.6L805.4 701.0L804.5 700.8L804.2 700.0L804.4 698.7L805.3 696.5L805.4 695.1L805.1 694.4L804.3 694.2L803.0 694.5L801.0 695.7L799.7 696.0L798.9 695.8L798.5 695.0L798.7 693.7L799.7 691.5L799.9 690.2L799.6 689.4L798.8 689.2L797.5 689.4L795.4 690.6L794.1 690.9L793.3 690.6L793.0 689.8L793.2 688.5L794.2 686.4L794.5 685.0L794.2 684.3L793.4 684.0L792.1 684.3L790.0 685.4L788.7 685.6L787.9 685.3L787.6 684.5L787.8 683.2L788.9 681.1L789.2 679.8L788.9 679.0L788.2 678.7L786.8 679.0L784.7 680.0L783.4 680.2L782.6 679.9L782.3 679.1L782.6 677.8L783.8 675.7L784.0 674.4L783.8 673.6L783.0 673.3L781.7 673.5L779.5 674.5L778.2 674.7L777.4 674.3L777.2 673.5L777.5 672.2L778.7 670.2L779.0 668.9L778.8 668.1L778.1 667.8L776.7 667.9L774.5 668.8L773.2 669.0L772.4 668.7L772.2 667.8L772.6 666.6L773.8 664.5L774.2 663.2L774.0 662.4L773.2 662.1L771.9 662.2L769.7 663.1L768.3 663.2L767.6 662.8L767.4 662.0L767.8 660.7L769.1 658.7L769.5 657.5L769.3 656.6L768.6 656.3L767.2 656.4L765.0 657.2L763.6 657.3L762.9 656.9L762.7 656.1L763.1 654.8L764.5 652.8L764.9 651.6L764.8 650.7L764.1 650.4L762.7 650.4L760.4 651.2L759.1 651.2L758.4 650.8L758.2 650.0L758.7 648.7L760.1 646.8L760.5 645.5L760.4 644.7L759.7 644.3L758.4 644.3L756.1 645.0L754.7 645.0L754.0 644.6L753.9 643.8L754.3 642.5L755.8 640.6L756.3 639.4L756.2 638.6L755.5 638.2L754.2 638.2L751.8 638.8L750.5 638.8L749.8 638.3L749.7 637.5L750.2 636.3L751.7 634.4L752.2 633.2L752.1 632.4L751.4 631.9L750.1 631.9L747.8 632.4L746.4 632.4L745.7 631.9L745.7 631.1L746.2 629.9L747.8 628.0L748.3 626.8L748.3 626.0L747.6 625.6L746.2 625.5L743.9 626.0L742.6 625.9L741.9 625.4L741.8 624.6L742.4 623.4L744.0 621.6L744.6 620.4L744.5 619.6L743.9 619.1L742.5 619.0L740.2 619.4L738.8 619.3L738.2 618.8L738.1 618.0L738.7 616.8L740.4 615.0L741.0 613.9L741.0 613.0L740.3 612.5L739.0 612.4L736.6 612.8L735.3 612.6L734.6 612.1L734.6 611.2L735.3 610.1L737.0 608.4L737.6 607.2L737.6 606.4L737.0 605.9L735.6 605.7L733.3 606.0L731.9 605.8L731.3 605.3L731.3 604.5L732.0 603.3L733.7 601.6L734.4 600.5L734.4 599.7L733.8 599.2L732.5 598.9L730.1 599.2L728.8 599.0L728.1 598.4L728.1 597.6L728.8 596.4L730.6 594.8L731.3 593.7L731.4 592.9L730.8 592.3L729.5 592.1L727.1 592.3L725.8 592.0L725.1 591.4L725.2 590.6L725.9 589.5L727.7 587.9L728.5 586.8L728.5 586.0L727.9 585.5L726.6 585.2L724.2 585.3L722.9 585.0L722.3 584.4L722.4 583.6L723.1 582.5L725.0 581.0L725.8 579.9L725.9 579.1L725.3 578.5L724.0 578.2L721.6 578.2L720.3 577.9L719.7 577.3L719.8 576.5L720.6 575.4L722.5 573.9L723.3 572.9L723.4 572.1L722.8 571.5L721.5 571.1L719.1 571.1L717.8 570.7L717.3 570.1L717.4 569.3L718.2 568.2L720.1 566.8L721.0 565.8L721.1 565.0L720.5 564.4L719.3 564.0L716.8 563.9L715.6 563.5L715.0 562.9L715.1 562.1L716.0 561.0L718.0 559.7L718.8 558.7L719.0 557.8L718.4 557.2L717.2 556.8L714.8 556.7L713.5 556.2L713.0 555.6L713.1 554.8L714.0 553.8L716.0 552.5L716.9 551.5L717.0 550.7L716.5 550.0L715.3 549.6L712.9 549.4L711.6 548.9L711.1 548.3L711.3 547.4L712.2 546.5L714.2 545.2L715.1 544.2L715.3 543.4L714.8 542.8L713.6 542.3L711.2 542.0L709.9 541.5L709.4 540.9L709.6 540.1L710.5 539.1L712.6 537.9L713.6 536.9L713.8 536.1L713.3 535.5L712.0 535.0L709.7 534.7L708.4 534.1L707.9 533.4L708.2 532.6L709.1 531.7L711.2 530.5L712.2 529.6L712.4 528.8L711.9 528.2L710.7 527.6L708.3 527.2L707.1 526.7L706.7 526.0L706.9 525.2L707.9 524.3L710.0 523.2L711.0 522.3L711.2 521.5L710.8 520.8L709.6 520.2L707.2 519.8L706.0 519.2L705.6 518.5L705.8 517.7L706.8 516.8L709.0 515.8L710.0 514.9L710.3 514.1L709.8 513.4L708.7 512.8L706.3 512.3L705.1 511.7L704.7 511.0L705.0 510.2L706.0 509.3L708.2 508.3L709.2 507.5L709.5 506.7L709.1 506.0L707.9 505.3L705.6 504.8L704.4 504.1L704.0 503.4L704.3 502.6L705.3 501.8L707.6 500.9L708.6 500.1L708.9 499.3L708.5 498.6L707.4 497.9L705.0 497.3L703.9 496.6L703.5 495.8L703.8 495.1L704.9 494.3L707.1 493.4L708.2 492.6L708.5 491.9L708.1 491.1L707.0 490.4L704.7 489.7L703.6 489.0L703.2 488.3L703.5 487.5L704.6 486.7L706.9 485.9L708.0 485.2L708.3 484.4L708.0 483.7L706.9 482.9L704.6 482.2L703.5 481.5L703.1 480.7L703.5 479.9L704.6 479.2L706.9 478.5L708.0 477.7L708.3 477.0L708.0 476.2L706.9 475.5L704.6 474.7L703.5 473.9L703.2 473.1L703.6 472.4L704.7 471.7L707.0 471.0L708.1 470.3L708.5 469.5L708.2 468.8L707.1 468.0L704.9 467.1L703.8 466.3L703.5 465.6L703.9 464.8L705.0 464.1L707.4 463.5L708.5 462.8L708.9 462.1L708.6 461.3L707.6 460.5L705.3 459.6L704.3 458.8L704.0 458.0L704.4 457.3L705.6 456.6L707.9 456.1L709.1 455.4L709.5 454.7L709.2 453.9L708.2 453.1L706.0 452.1L705.0 451.2L704.7 450.4L705.1 449.7L706.3 449.1L708.7 448.6L709.8 448.0L710.3 447.3L710.0 446.5L709.0 445.6L706.8 444.6L705.8 443.7L705.6 442.9L706.0 442.2L707.2 441.6L709.6 441.2L710.8 440.6L711.2 439.9L711.0 439.1L710.0 438.2L707.9 437.1L706.9 436.2L706.7 435.4L707.1 434.7L708.3 434.2L710.7 433.8L711.9 433.2L712.4 432.6L712.2 431.8L711.2 430.9L709.1 429.7L708.2 428.8L707.9 428.0L708.4 427.3L709.7 426.7L712.0 426.4L713.3 425.9L713.8 425.3L713.6 424.5L712.6 423.5L710.5 422.3L709.6 421.3L709.4 420.5L709.9 419.9L711.2 419.4L713.6 419.1L714.8 418.6L715.3 418.0L715.1 417.2L714.2 416.2L712.2 414.9L711.3 414.0L711.1 413.1L711.6 412.5L712.9 412.0L715.3 411.8L716.5 411.4L717.0 410.7L716.9 409.9L716.0 408.9L714.0 407.6L713.1 406.6L713.0 405.8L713.5 405.2L714.8 404.7L717.2 404.6L718.4 404.2L719.0 403.6L718.8 402.7L718.0 401.7L716.0 400.4L715.1 399.3L715.0 398.5L715.6 397.9L716.8 397.5L719.3 397.4L720.5 397.0L721.1 396.4L721.0 395.6L720.1 394.6L718.2 393.2L717.4 392.1L717.3 391.3L717.8 390.7L719.1 390.3L721.5 390.3L722.8 389.9L723.4 389.3L723.3 388.5L722.5 387.5L720.6 386.0L719.8 384.9L719.7 384.1L720.3 383.5L721.6 383.2L724.0 383.2L725.3 382.9L725.9 382.3L725.8 381.5L725.0 380.4L723.1 378.9L722.4 377.8L722.3 377.0L722.9 376.4L724.2 376.1L726.6 376.2L727.9 375.9L728.5 375.4L728.5 374.6L727.7 373.5L725.9 371.9L725.2 370.8L725.1 370.0L725.8 369.4L727.1 369.1L729.5 369.3L730.8 369.1L731.4 368.5L731.3 367.7L730.6 366.6L728.8 365.0L728.1 363.8L728.1 363.0L728.8 362.4L730.1 362.2L732.5 362.5L733.8 362.2L734.4 361.7L734.4 360.9L733.7 359.8L732.0 358.1L731.3 356.9L731.3 356.1L731.9 355.6L733.3 355.4L735.6 355.7L737.0 355.5L737.6 355.0L737.6 354.2L737.0 353.0L735.3 351.3L734.6 350.2L734.6 349.3L735.3 348.8L736.6 348.6L739.0 349.0L740.3 348.9L741.0 348.4L741.0 347.5L740.4 346.4L738.7 344.6L738.1 343.4L738.2 342.6L738.8 342.1L740.2 342.0L742.5 342.4L743.9 342.3L744.5 341.8L744.6 341.0L744.0 339.8L742.4 338.0L741.8 336.8L741.9 336.0L742.6 335.5L743.9 335.4L746.2 335.9L747.6 335.8L748.3 335.4L748.3 334.6L747.8 333.4L746.2 331.5L745.7 330.3L745.7 329.5L746.4 329.0L747.8 329.0L750.1 329.5L751.4 329.5L752.1 329.0L752.2 328.2L751.7 327.0L750.2 325.1L749.7 323.9L749.8 323.1L750.5 322.6L751.8 322.6L754.2 323.2L755.5 323.2L756.2 322.8L756.3 322.0L755.8 320.8L754.3 318.9L753.9 317.6L754.0 316.8L754.7 316.4L756.1 316.4L758.4 317.1L759.7 317.1L760.4 316.7L760.5 315.9L760.1 314.6L758.7 312.7L758.2 311.4L758.4 310.6L759.1 310.2L760.4 310.2L762.7 311.0L764.1 311.0L764.8 310.7L764.9 309.8L764.5 308.6L763.1 306.6L762.7 305.3L762.9 304.5L763.6 304.1L765.0 304.2L767.2 305.0L768.6 305.1L769.3 304.8L769.5 303.9L769.1 302.7L767.8 300.7L767.4 299.4L767.6 298.6L768.3 298.2L769.7 298.3L771.9 299.2L773.2 299.3L774.0 299.0L774.2 298.2L773.8 296.9L772.6 294.8L772.2 293.6L772.4 292.7L773.2 292.4L774.5 292.6L776.7 293.5L778.1 293.6L778.8 293.3L779.0 292.5L778.7 291.2L777.5 289.2L777.2 287.9L777.4 287.1L778.2 286.7L779.5 286.9L781.7 287.9L783.0 288.1L783.8 287.8L784.0 287.0L783.8 285.7L782.6 283.6L782.3 282.3L782.6 281.5L783.4 281.2L784.7 281.4L786.8 282.4L788.2 282.7L788.9 282.4L789.2 281.6L788.9 280.3L787.8 278.2L787.6 276.9L787.9 276.1L788.7 275.8L790.0 276.0L792.1 277.1L793.4 277.4L794.2 277.1L794.5 276.4L794.2 275.0L793.2 272.9L793.0 271.6L793.3 270.8L794.1 270.5L795.4 270.8L797.5 272.0L798.8 272.2L799.6 272.0L799.9 271.2L799.7 269.9L798.7 267.7L798.5 266.4L798.9 265.6L799.7 265.4L801.0 265.7L803.0 266.9L804.3 267.2L805.1 267.0L805.4 266.3L805.3 264.9L804.4 262.7L804.2 261.4L804.5 260.6L805.4 260.4L806.6 260.8L808.7 262.0L810.0 262.4L810.8 262.2L811.1 261.4L811.0 260.1L810.1 257.9L810.0 256.5L810.4 255.8L811.2 255.6L812.5 256.0L814.5 257.3L815.7 257.7L816.6 257.5L816.9 256.8L816.8 255.4L816.0 253.2L815.9 251.8L816.3 251.1L817.1 250.9L818.4 251.3L820.4 252.7L821.6 253.1L822.5 253.0L822.8 252.3L822.8 250.9L822.0 248.6L822.0 247.3L822.4 246.6L823.2 246.4L824.5 246.9L826.4 248.3L827.7 248.7L828.5 248.6L828.9 247.9L828.9 246.6L828.2 244.3L828.2 242.9L828.6 242.2L829.4 242.1L830.7 242.5L832.6 244.0L833.8 244.5L834.6 244.4L835.0 243.7L835.0 242.4L834.4 240.0L834.4 238.7L834.9 238.0L835.7 237.9L836.9 238.4L838.8 239.9L840.0 240.4L840.8 240.3L841.3 239.6L841.3 238.3L840.8 236.0L840.8 234.6L841.3 233.9L842.1 233.9L843.3 234.4L845.2 236.0L846.4 236.5L847.2 236.5L847.6 235.8L847.7 234.4L847.2 232.1L847.3 230.8L847.8 230.1L848.6 230.0L849.8 230.6L851.6 232.2L852.8 232.8L853.6 232.7L854.1 232.1L854.2 230.7L853.8 228.4L853.9 227.0L854.4 226.4L855.2 226.3L856.4 226.9L858.2 228.6L859.3 229.2L860.2 229.2L860.7 228.5L860.8 227.2L860.4 224.8L860.6 223.5L861.1 222.8L862.0 222.8L863.1 223.5L864.8 225.2L866.0 225.8L866.8 225.8L867.3 225.2L867.5 223.8L867.2 221.5L867.4 220.1L867.9 219.5L868.7 219.5L869.9 220.2L871.6 221.9L872.7 222.6L873.5 222.6L874.0 222.0L874.3 220.7L874.0 218.3L874.2 217.0L874.8 216.3L875.6 216.3L876.8 217.0L878.4 218.8L879.5 219.5L880.3 219.6L880.9 219.0L881.1 217.7L880.9 215.3L881.2 214.0L881.8 213.3L882.6 213.4L883.7 214.1L885.3 215.9L886.4 216.7L887.2 216.7L887.7 216.1L888.0 214.8L887.9 212.4L888.2 211.1L888.8 210.5L889.6 210.6L890.7 211.3L892.2 213.2L893.3 214.0L894.1 214.1L894.7 213.5L895.0 212.2L895.0 209.8L895.3 208.5L895.9 207.9L896.7 208.0L897.8 208.8L899.3 210.7L900.3 211.5L901.1 211.6L901.7 211.0L902.1 209.7L902.1 207.3L902.5 206.0L903.1 205.5L903.9 205.6L905.0 206.4L906.4 208.3L907.4 209.2L908.2 209.3L908.8 208.7L909.2 207.5L909.3 205.0L909.7 203.8L910.3 203.2L911.1 203.3L912.2 204.2L913.5 206.2L914.5 207.0L915.4 207.2L916.0 206.6L916.4 205.4L916.5 203.0L917.0 201.7L917.6 201.2L918.4 201.3L919.4 202.2L920.7 204.2L921.7 205.1L922.5 205.2L923.2 204.7L923.6 203.5L923.8 201.1L924.3 199.8L924.9 199.3L925.8 199.5L926.7 200.4L928.0 202.4L929.0 203.3L929.8 203.5L930.4 203.0L930.9 201.8L931.2 199.4L931.7 198.1L932.3 197.6L933.1 197.8L934.1 198.7L935.3 200.8L936.3 201.8L937.1 202.0L937.7 201.5L938.2 200.2L938.5 197.9L939.1 196.6L939.8 196.1L940.6 196.4L941.5 197.3L942.7 199.4L943.6 200.4L944.4 200.6L945.0 200.1L945.6 198.9L946.0 196.5L946.5 195.3L947.2 194.9L948.0 195.1L948.9 196.1L950.0 198.2L950.9 199.2L951.7 199.4L952.4 199.0L953.0 197.8L953.4 195.4L954.0 194.2L954.7 193.8L955.5 194.0L956.4 195.0L957.4 197.2L958.3 198.2L959.1 198.5L959.8 198.0L960.4 196.9L960.9 194.5L961.5 193.3L962.2 192.9L963.0 193.2L963.9 194.2L964.9 196.4L965.7 197.4L966.5 197.7L967.2 197.3L967.9 196.1L968.4 193.8L969.1 192.6L969.8 192.2L970.6 192.5L971.4 193.5L972.3 195.8L973.1 196.8L973.9 197.1L974.6 196.7L975.3 195.6L975.9 193.2L976.6 192.1L977.4 191.7L978.1 192.0L978.9 193.1L979.8 195.3L980.6 196.4L981.3 196.7L982.1 196.3L982.8 195.2L983.5 192.9L984.2 191.8L984.9 191.4L985.7 191.7L986.5 192.8L987.3 195.1L988.0 196.2L988.8 196.5L989.5 196.2L990.3 195.1L991.0 192.8L991.7 191.7Z" fill="#9e9887" fill-rule="evenodd"/>
<path d="M992.5 153.9L1026.7 155.7L1060.4 161.0L1093.5 169.9L1125.4 182.2L1155.9 197.7L1184.6 216.3L1211.2 237.8L1235.4 262.0L1256.9 288.6L1275.5 317.3L1291.0 347.8L1303.3 379.7L1312.2 412.8L1317.5 446.5L1319.3 480.7L1317.5 514.9L1312.2 548.6L1303.3 581.7L1291.0 613.6L1275.5 644.1L1256.9 672.8L1235.4 699.4L1211.2 723.6L1184.6 745.1L1155.9 763.7L1125.4 779.2L1093.5 791.5L1060.4 800.4L1026.7 805.7L992.5 807.5L958.3 805.7L924.6 800.4L891.5 791.5L859.6 779.2L829.1 763.7L800.4 745.1L773.8 723.6L749.6 699.4L728.1 672.8L709.5 644.1L694.0 613.6L681.7 581.7L672.8 548.6L667.5 514.9L665.7 480.7L667.5 446.5L672.8 412.8L681.7 379.7L694.0 347.8L709.5 317.3L728.1 288.6L749.6 262.0L773.8 237.8L800.4 216.3L829.1 197.7L859.6 182.2L891.5 169.9L924.6 161.0L958.3 155.7Z" fill="none" stroke="#000" stroke-width="1.4"/>
<circle cx="992.5" cy="480.7" r="286.6" fill="none" stroke="#a6da88" stroke-width="0.8"/>
<path d="M992.5 191.3L993.3 191.7L994.0 192.8L994.7 195.1L995.5 196.2L996.2 196.5L997.0 196.2L997.7 195.1L998.5 192.8L999.3 191.7L1000.1 191.4L1000.8 191.8L1001.5 192.9L1002.2 195.2L1002.9 196.3L1003.7 196.7L1004.4 196.4L1005.2 195.3L1006.1 193.1L1006.9 192.0L1007.6 191.7L1008.4 192.1L1009.1 193.2L1009.7 195.6L1010.4 196.7L1011.1 197.1L1011.9 196.8L1012.7 195.8L1013.6 193.5L1014.4 192.5L1015.2 192.2L1015.9 192.6L1016.6 193.8L1017.1 196.1L1017.8 197.3L1018.5 197.7L1019.3 197.4L1020.1 196.4L1021.1 194.2L1022.0 193.2L1022.8 192.9L1023.5 193.3L1024.1 194.5L1024.6 196.9L1025.2 198.0L1025.9 198.5L1026.7 198.2L1027.6 197.2L1028.6 195.0L1029.5 194.0L1030.3 193.8L1031.0 194.2L1031.6 195.4L1032.0 197.8L1032.6 199.0L1033.3 199.4L1034.1 199.2L1035.0 198.2L1036.1 196.1L1037.0 195.1L1037.8 194.9L1038.5 195.3L1039.0 196.5L1039.4 198.9L1040.0 200.1L1040.6 200.6L1041.4 200.4L1042.3 199.4L1043.5 197.3L1044.4 196.4L1045.2 196.1L1045.9 196.6L1046.5 197.9L1046.8 200.2L1047.3 201.5L1047.9 202.0L1048.7 201.8L1049.7 200.8L1050.9 198.7L1051.9 197.8L1052.7 197.6L1053.3 198.1L1053.8 199.4L1054.1 201.8L1054.6 203.0L1055.2 203.5L1056.0 203.3L1057.0 202.4L1058.3 200.4L1059.2 199.5L1060.1 199.3L1060.7 199.8L1061.2 201.1L1061.4 203.5L1061.8 204.7L1062.5 205.2L1063.3 205.1L1064.3 204.2L1065.6 202.2L1066.6 201.3L1067.4 201.2L1068.0 201.7L1068.5 203.0L1068.6 205.4L1069.0 206.6L1069.6 207.2L1070.5 207.0L1071.5 206.2L1072.8 204.2L1073.9 203.3L1074.7 203.2L1075.3 203.8L1075.7 205.0L1075.8 207.5L1076.2 208.7L1076.8 209.3L1077.6 209.2L1078.6 208.3L1080.0 206.4L1081.1 205.6L1081.9 205.5L1082.5 206.0L1082.9 207.3L1082.9 209.7L1083.3 211.0L1083.9 211.6L1084.7 211.5L1085.7 210.7L1087.2 208.8L1088.3 208.0L1089.1 207.9L1089.7 208.5L1090.0 209.8L1090.0 212.2L1090.3 213.5L1090.9 214.1L1091.7 214.0L1092.8 213.2L1094.3 211.3L1095.4 210.6L1096.2 210.5L1096.8 211.1L1097.1 212.4L1097.0 214.8L1097.3 216.1L1097.8 216.7L1098.6 216.7L1099.7 215.9L1101.3 214.1L1102.4 213.4L1103.2 213.3L1103.8 214.0L1104.1 215.3L1103.9 217.7L1104.1 219.0L1104.7 219.6L1105.5 219.5L1106.6 218.8L1108.2 217.0L1109.4 216.3L1110.2 216.3L1110.8 217.0L1111.0 218.3L1110.7 220.7L1111.0 222.0L1111.5 222.6L1112.3 222.6L1113.4 221.9L1115.1 220.2L1116.3 219.5L1117.1 219.5L1117.6 220.1L1117.8 221.5L1117.5 223.8L1117.7 225.2L1118.2 225.8L1119.0 225.8L1120.2 225.2L1121.9 223.5L1123.0 222.8L1123.9 222.8L1124.4 223.5L1124.6 224.8L1124.2 227.2L1124.3 228.5L1124.8 229.2L1125.7 229.2L1126.8 228.6L1128.6 226.9L1129.8 226.3L1130.6 226.4L1131.1 227.0L1131.2 228.4L1130.8 230.7L1130.9 232.1L1131.4 232.7L1132.2 232.8L1133.4 232.2L1135.2 230.6L1136.4 230.0L1137.2 230.1L1137.7 230.8L1137.8 232.1L1137.3 234.4L1137.4 235.8L1137.8 236.5L1138.6 236.5L1139.8 236.0L1141.7 234.4L1142.9 233.9L1143.7 233.9L1144.2 234.6L1144.2 236.0L1143.7 238.3L1143.7 239.6L1144.2 240.3L1145.0 240.4L1146.2 239.9L1148.1 238.4L1149.3 237.9L1150.1 238.0L1150.6 238.7L1150.6 240.0L1150.0 242.4L1150.0 243.7L1150.4 244.4L1151.2 244.5L1152.4 244.0L1154.3 242.5L1155.6 242.1L1156.4 242.2L1156.8 242.9L1156.8 244.3L1156.1 246.6L1156.1 247.9L1156.5 248.6L1157.3 248.7L1158.6 248.3L1160.5 246.9L1161.8 246.4L1162.6 246.6L1163.0 247.3L1163.0 248.6L1162.2 250.9L1162.2 252.3L1162.5 253.0L1163.4 253.1L1164.6 252.7L1166.6 251.3L1167.9 250.9L1168.7 251.1L1169.1 251.8L1169.0 253.2L1168.2 255.4L1168.1 256.8L1168.4 257.5L1169.3 257.7L1170.5 257.3L1172.5 256.0L1173.8 255.6L1174.6 255.8L1175.0 256.5L1174.9 257.9L1174.0 260.1L1173.9 261.4L1174.2 262.2L1175.0 262.4L1176.3 262.0L1178.4 260.8L1179.6 260.4L1180.5 260.6L1180.8 261.4L1180.6 262.7L1179.7 264.9L1179.6 266.3L1179.9 267.0L1180.7 267.2L1182.0 266.9L1184.0 265.7L1185.3 265.4L1186.1 265.6L1186.5 266.4L1186.3 267.7L1185.3 269.9L1185.1 271.2L1185.4 272.0L1186.2 272.2L1187.5 272.0L1189.6 270.8L1190.9 270.5L1191.7 270.8L1192.0 271.6L1191.8 272.9L1190.8 275.0L1190.5 276.4L1190.8 277.1L1191.6 277.4L1192.9 277.1L1195.0 276.0L1196.3 275.8L1197.1 276.1L1197.4 276.9L1197.2 278.2L1196.1 280.3L1195.8 281.6L1196.1 282.4L1196.8 282.7L1198.2 282.4L1200.3 281.4L1201.6 281.2L1202.4 281.5L1202.7 282.3L1202.4 283.6L1201.2 285.7L1201.0 287.0L1201.2 287.8L1202.0 288.1L1203.3 287.9L1205.5 286.9L1206.8 286.7L1207.6 287.1L1207.8 287.9L1207.5 289.2L1206.3 291.2L1206.0 292.5L1206.2 293.3L1206.9 293.6L1208.3 293.5L1210.5 292.6L1211.8 292.4L1212.6 292.7L1212.8 293.6L1212.4 294.8L1211.2 296.9L1210.8 298.2L1211.0 299.0L1211.8 299.3L1213.1 299.2L1215.3 298.3L1216.7 298.2L1217.4 298.6L1217.6 299.4L1217.2 300.7L1215.9 302.7L1215.5 303.9L1215.7 304.8L1216.4 305.1L1217.8 305.0L1220.0 304.2L1221.4 304.1L1222.1 304.5L1222.3 305.3L1221.9 306.6L1220.5 308.6L1220.1 309.8L1220.2 310.7L1220.9 311.0L1222.3 311.0L1224.6 310.2L1225.9 310.2L1226.6 310.6L1226.8 311.4L1226.3 312.7L1224.9 314.6L1224.5 315.9L1224.6 316.7L1225.3 317.1L1226.6 317.1L1228.9 316.4L1230.3 316.4L1231.0 316.8L1231.1 317.6L1230.7 318.9L1229.2 320.8L1228.7 322.0L1228.8 322.8L1229.5 323.2L1230.8 323.2L1233.2 322.6L1234.5 322.6L1235.2 323.1L1235.3 323.9L1234.8 325.1L1233.3 327.0L1232.8 328.2L1232.9 329.0L1233.6 329.5L1234.9 329.5L1237.2 329.0L1238.6 329.0L1239.3 329.5L1239.3 330.3L1238.8 331.5L1237.2 333.4L1236.7 334.6L1236.7 335.4L1237.4 335.8L1238.8 335.9L1241.1 335.4L1242.4 335.5L1243.1 336.0L1243.2 336.8L1242.6 338.0L1241.0 339.8L1240.4 341.0L1240.5 341.8L1241.1 342.3L1242.5 342.4L1244.8 342.0L1246.2 342.1L1246.8 342.6L1246.9 343.4L1246.3 344.6L1244.6 346.4L1244.0 347.5L1244.0 348.4L1244.7 348.9L1246.0 349.0L1248.4 348.6L1249.7 348.8L1250.4 349.3L1250.4 350.2L1249.7 351.3L1248.0 353.0L1247.4 354.2L1247.4 355.0L1248.0 355.5L1249.4 355.7L1251.7 355.4L1253.1 355.6L1253.7 356.1L1253.7 356.9L1253.0 358.1L1251.3 359.8L1250.6 360.9L1250.6 361.7L1251.2 362.2L1252.5 362.5L1254.9 362.2L1256.2 362.4L1256.9 363.0L1256.9 363.8L1256.2 365.0L1254.4 366.6L1253.7 367.7L1253.6 368.5L1254.2 369.1L1255.5 369.3L1257.9 369.1L1259.2 369.4L1259.9 370.0L1259.8 370.8L1259.1 371.9L1257.3 373.5L1256.5 374.6L1256.5 375.4L1257.1 375.9L1258.4 376.2L1260.8 376.1L1262.1 376.4L1262.7 377.0L1262.6 377.8L1261.9 378.9L1260.0 380.4L1259.2 381.5L1259.1 382.3L1259.7 382.9L1261.0 383.2L1263.4 383.2L1264.7 383.5L1265.3 384.1L1265.2 384.9L1264.4 386.0L1262.5 387.5L1261.7 388.5L1261.6 389.3L1262.2 389.9L1263.5 390.3L1265.9 390.3L1267.2 390.7L1267.7 391.3L1267.6 392.1L1266.8 393.2L1264.9 394.6L1264.0 395.6L1263.9 396.4L1264.5 397.0L1265.7 397.4L1268.2 397.5L1269.4 397.9L1270.0 398.5L1269.9 399.3L1269.0 400.4L1267.0 401.7L1266.2 402.7L1266.0 403.6L1266.6 404.2L1267.8 404.6L1270.2 404.7L1271.5 405.2L1272.0 405.8L1271.9 406.6L1271.0 407.6L1269.0 408.9L1268.1 409.9L1268.0 410.7L1268.5 411.4L1269.7 411.8L1272.1 412.0L1273.4 412.5L1273.9 413.1L1273.7 414.0L1272.8 414.9L1270.8 416.2L1269.9 417.2L1269.7 418.0L1270.2 418.6L1271.4 419.1L1273.8 419.4L1275.1 419.9L1275.6 420.5L1275.4 421.3L1274.5 422.3L1272.4 423.5L1271.4 424.5L1271.2 425.3L1271.7 425.9L1273.0 426.4L1275.3 426.7L1276.6 427.3L1277.1 428.0L1276.8 428.8L1275.9 429.7L1273.8 430.9L1272.8 431.8L1272.6 432.6L1273.1 433.2L1274.3 433.8L1276.7 434.2L1277.9 434.7L1278.3 435.4L1278.1 436.2L1277.1 437.1L1275.0 438.2L1274.0 439.1L1273.8 439.9L1274.2 440.6L1275.4 441.2L1277.8 441.6L1279.0 442.2L1279.4 442.9L1279.2 443.7L1278.2 444.6L1276.0 445.6L1275.0 446.5L1274.7 447.3L1275.2 448.0L1276.3 448.6L1278.7 449.1L1279.9 449.7L1280.3 450.4L1280.0 451.2L1279.0 452.1L1276.8 453.1L1275.8 453.9L1275.5 454.7L1275.9 455.4L1277.1 456.1L1279.4 456.6L1280.6 457.3L1281.0 458.0L1280.7 458.8L1279.7 459.6L1277.4 460.5L1276.4 461.3L1276.1 462.1L1276.5 462.8L1277.6 463.5L1280.0 464.1L1281.1 464.8L1281.5 465.6L1281.2 466.3L1280.1 467.1L1277.9 468.0L1276.8 468.8L1276.5 469.5L1276.9 470.3L1278.0 471.0L1280.3 471.7L1281.4 472.4L1281.8 473.1L1281.5 473.9L1280.4 474.7L1278.1 475.5L1277.0 476.2L1276.7 477.0L1277.0 477.7L1278.1 478.5L1280.4 479.2L1281.5 479.9L1281.9 480.7L1281.5 481.5L1280.4 482.2L1278.1 482.9L1277.0 483.7L1276.7 484.4L1277.0 485.2L1278.1 485.9L1280.4 486.7L1281.5 487.5L1281.8 488.3L1281.4 489.0L1280.3 489.7L1278.0 490.4L1276.9 491.1L1276.5 491.9L1276.8 492.6L1277.9 493.4L1280.1 494.3L1281.2 495.1L1281.5 495.8L1281.1 496.6L1280.0 497.3L1277.6 497.9L1276.5 498.6L1276.1 499.3L1276.4 500.1L1277.4 500.9L1279.7 501.8L1280.7 502.6L1281.0 503.4L1280.6 504.1L1279.4 504.8L1277.1 505.3L1275.9 506.0L1275.5 506.7L1275.8 507.5L1276.8 508.3L1279.0 509.3L1280.0 510.2L1280.3 511.0L1279.9 511.7L1278.7 512.3L1276.3 512.8L1275.2 513.4L1274.7 514.1L1275.0 514.9L1276.0 515.8L1278.2 516.8L1279.2 517.7L1279.4 518.5L1279.0 519.2L1277.8 519.8L1275.4 520.2L1274.2 520.8L1273.8 521.5L1274.0 522.3L1275.0 523.2L1277.1 524.3L1278.1 525.2L1278.3 526.0L1277.9 526.7L1276.7 527.2L1274.3 527.6L1273.1 528.2L1272.6 528.8L1272.8 529.6L1273.8 530.5L1275.9 531.7L1276.8 532.6L1277.1 533.4L1276.6 534.1L1275.3 534.7L1273.0 535.0L1271.7 535.5L1271.2 536.1L1271.4 536.9L1272.4 537.9L1274.5 539.1L1275.4 540.1L1275.6 540.9L1275.1 541.5L1273.8 542.0L1271.4 542.3L1270.2 542.8L1269.7 543.4L1269.9 544.2L1270.8 545.2L1272.8 546.5L1273.7 547.4L1273.9 548.3L1273.4 548.9L1272.1 549.4L1269.7 549.6L1268.5 550.0L1268.0 550.7L1268.1 551.5L1269.0 552.5L1271.0 553.8L1271.9 554.8L1272.0 555.6L1271.5 556.2L1270.2 556.7L1267.8 556.8L1266.6 557.2L1266.0 557.8L1266.2 558.7L1267.0 559.7L1269.0 561.0L1269.9 562.1L1270.0 562.9L1269.4 563.5L1268.2 563.9L1265.7 564.0L1264.5 564.4L1263.9 565.0L1264.0 565.8L1264.9 566.8L1266.8 568.2L1267.6 569.3L1267.7 570.1L1267.2 570.7L1265.9 571.1L1263.5 571.1L1262.2 571.5L1261.6 572.1L1261.7 572.9L1262.5 573.9L1264.4 575.4L1265.2 576.5L1265.3 577.3L1264.7 577.9L1263.4 578.2L1261.0 578.2L1259.7 578.5L1259.1 579.1L1259.2 579.9L1260.0 581.0L1261.9 582.5L1262.6 583.6L1262.7 584.4L1262.1 585.0L1260.8 585.3L1258.4 585.2L1257.1 585.5L1256.5 586.0L1256.5 586.8L1257.3 587.9L1259.1 589.5L1259.8 590.6L1259.9 591.4L1259.2 592.0L1257.9 592.3L1255.5 592.1L1254.2 592.3L1253.6 592.9L1253.7 593.7L1254.4 594.8L1256.2 596.4L1256.9 597.6L1256.9 598.4L1256.2 599.0L1254.9 599.2L1252.5 598.9L1251.2 599.2L1250.6 599.7L1250.6 600.5L1251.3 601.6L1253.0 603.3L1253.7 604.5L1253.7 605.3L1253.1 605.8L1251.7 606.0L1249.4 605.7L1248.0 605.9L1247.4 606.4L1247.4 607.2L1248.0 608.4L1249.7 610.1L1250.4 611.2L1250.4 612.1L1249.7 612.6L1248.4 612.8L1246.0 612.4L1244.7 612.5L1244.0 613.0L1244.0 613.9L1244.6 615.0L1246.3 616.8L1246.9 618.0L1246.8 618.8L1246.2 619.3L1244.8 619.4L1242.5 619.0L1241.1 619.1L1240.5 619.6L1240.4 620.4L1241.0 621.6L1242.6 623.4L1243.2 624.6L1243.1 625.4L1242.4 625.9L1241.1 626.0L1238.8 625.5L1237.4 625.6L1236.7 626.0L1236.7 626.8L1237.2 628.0L1238.8 629.9L1239.3 631.1L1239.3 631.9L1238.6 632.4L1237.2 632.4L1234.9 631.9L1233.6 631.9L1232.9 632.4L1232.8 633.2L1233.3 634.4L1234.8 636.3L1235.3 637.5L1235.2 638.3L1234.5 638.8L1233.2 638.8L1230.8 638.2L1229.5 638.2L1228.8 638.6L1228.7 639.4L1229.2 640.6L1230.7 642.5L1231.1 643.8L1231.0 644.6L1230.3 645.0L1228.9 645.0L1226.6 644.3L1225.3 644.3L1224.6 644.7L1224.5 645.5L1224.9 646.8L1226.3 648.7L1226.8 650.0L1226.6 650.8L1225.9 651.2L1224.6 651.2L1222.3 650.4L1220.9 650.4L1220.2 650.7L1220.1 651.6L1220.5 652.8L1221.9 654.8L1222.3 656.1L1222.1 656.9L1221.4 657.3L1220.0 657.2L1217.8 656.4L1216.4 656.3L1215.7 656.6L1215.5 657.5L1215.9 658.7L1217.2 660.7L1217.6 662.0L1217.4 662.8L1216.7 663.2L1215.3 663.1L1213.1 662.2L1211.8 662.1L1211.0 662.4L1210.8 663.2L1211.2 664.5L1212.4 666.6L1212.8 667.8L1212.6 668.7L1211.8 669.0L1210.5 668.8L1208.3 667.9L1206.9 667.8L1206.2 668.1L1206.0 668.9L1206.3 670.2L1207.5 672.2L1207.8 673.5L1207.6 674.3L1206.8 674.7L1205.5 674.5L1203.3 673.5L1202.0 673.3L1201.2 673.6L1201.0 674.4L1201.2 675.7L1202.4 677.8L1202.7 679.1L1202.4 679.9L1201.6 680.2L1200.3 680.0L1198.2 679.0L1196.8 678.7L1196.1 679.0L1195.8 679.8L1196.1 681.1L1197.2 683.2L1197.4 684.5L1197.1 685.3L1196.3 685.6L1195.0 685.4L1192.9 684.3L1191.6 684.0L1190.8 684.3L1190.5 685.0L1190.8 686.4L1191.8 688.5L1192.0 689.8L1191.7 690.6L1190.9 690.9L1189.6 690.6L1187.5 689.4L1186.2 689.2L1185.4 689.4L1185.1 690.2L1185.3 691.5L1186.3 693.7L1186.5 695.0L1186.1 695.8L1185.3 696.0L1184.0 695.7L1182.0 694.5L1180.7 694.2L1179.9 694.4L1179.6 695.1L1179.7 696.5L1180.6 698.7L1180.8 700.0L1180.5 700.8L1179.6 701.0L1178.4 700.6L1176.3 699.4L1175.0 699.0L1174.2 699.2L1173.9 700.0L1174.0 701.3L1174.9 703.5L1175.0 704.9L1174.6 705.6L1173.8 705.8L1172.5 705.4L1170.5 704.1L1169.3 703.7L1168.4 703.9L1168.1 704.6L1168.2 706.0L1169.0 708.2L1169.1 709.6L1168.7 710.3L1167.9 710.5L1166.6 710.1L1164.6 708.7L1163.4 708.3L1162.5 708.4L1162.2 709.1L1162.2 710.5L1163.0 712.8L1163.0 714.1L1162.6 714.8L1161.8 715.0L1160.5 714.5L1158.6 713.1L1157.3 712.7L1156.5 712.8L1156.1 713.5L1156.1 714.8L1156.8 717.1L1156.8 718.5L1156.4 719.2L1155.6 719.3L1154.3 718.9L1152.4 717.4L1151.2 716.9L1150.4 717.0L1150.0 717.7L1150.0 719.0L1150.6 721.4L1150.6 722.7L1150.1 723.4L1149.3 723.5L1148.1 723.0L1146.2 721.5L1145.0 721.0L1144.2 721.1L1143.7 721.8L1143.7 723.1L1144.2 725.4L1144.2 726.8L1143.7 727.5L1142.9 727.5L1141.7 727.0L1139.8 725.4L1138.6 724.9L1137.8 724.9L1137.4 725.6L1137.3 727.0L1137.8 729.3L1137.7 730.6L1137.2 731.3L1136.4 731.4L1135.2 730.8L1133.4 729.2L1132.2 728.6L1131.4 728.7L1130.9 729.3L1130.8 730.7L1131.2 733.0L1131.1 734.4L1130.6 735.0L1129.8 735.1L1128.6 734.5L1126.8 732.8L1125.7 732.2L1124.8 732.2L1124.3 732.9L1124.2 734.2L1124.6 736.6L1124.4 737.9L1123.9 738.6L1123.0 738.6L1121.9 737.9L1120.2 736.2L1119.0 735.6L1118.2 735.6L1117.7 736.2L1117.5 737.6L1117.8 739.9L1117.6 741.3L1117.1 741.9L1116.3 741.9L1115.1 741.2L1113.4 739.5L1112.3 738.8L1111.5 738.8L1111.0 739.4L1110.7 740.7L1111.0 743.1L1110.8 744.4L1110.2 745.1L1109.4 745.1L1108.2 744.4L1106.6 742.6L1105.5 741.9L1104.7 741.8L1104.1 742.4L1103.9 743.7L1104.1 746.1L1103.8 747.4L1103.2 748.1L1102.4 748.0L1101.3 747.3L1099.7 745.5L1098.6 744.7L1097.8 744.7L1097.3 745.3L1097.0 746.6L1097.1 749.0L1096.8 750.3L1096.2 750.9L1095.4 750.8L1094.3 750.1L1092.8 748.2L1091.7 747.4L1090.9 747.3L1090.3 747.9L1090.0 749.2L1090.0 751.6L1089.7 752.9L1089.1 753.5L1088.3 753.4L1087.2 752.6L1085.7 750.7L1084.7 749.9L1083.9 749.8L1083.3 750.4L1082.9 751.7L1082.9 754.1L1082.5 755.4L1081.9 755.9L1081.1 755.8L1080.0 755.0L1078.6 753.1L1077.6 752.2L1076.8 752.1L1076.2 752.7L1075.8 753.9L1075.7 756.4L1075.3 757.6L1074.7 758.2L1073.9 758.1L1072.8 757.2L1071.5 755.2L1070.5 754.4L1069.6 754.2L1069.0 754.8L1068.6 756.0L1068.5 758.4L1068.0 759.7L1067.4 760.2L1066.6 760.1L1065.6 759.2L1064.3 757.2L1063.3 756.3L1062.5 756.2L1061.8 756.7L1061.4 757.9L1061.2 760.3L1060.7 761.6L1060.1 762.1L1059.2 761.9L1058.3 761.0L1057.0 759.0L1056.0 758.1L1055.2 757.9L1054.6 758.4L1054.1 759.6L1053.8 762.0L1053.3 763.3L1052.7 763.8L1051.9 763.6L1050.9 762.7L1049.7 760.6L1048.7 759.6L1047.9 759.4L1047.3 759.9L1046.8 761.2L1046.5 763.5L1045.9 764.8L1045.2 765.3L1044.4 765.0L1043.5 764.1L1042.3 762.0L1041.4 761.0L1040.6 760.8L1040.0 761.3L1039.4 762.5L1039.0 764.9L1038.5 766.1L1037.8 766.5L1037.0 766.3L1036.1 765.3L1035.0 763.2L1034.1 762.2L1033.3 762.0L1032.6 762.4L1032.0 763.6L1031.6 766.0L1031.0 767.2L1030.3 767.6L1029.5 767.4L1028.6 766.4L1027.6 764.2L1026.7 763.2L1025.9 762.9L1025.2 763.4L1024.6 764.5L1024.1 766.9L1023.5 768.1L1022.8 768.5L1022.0 768.2L1021.1 767.2L1020.1 765.0L1019.3 764.0L1018.5 763.7L1017.8 764.1L1017.1 765.3L1016.6 767.6L1015.9 768.8L1015.2 769.2L1014.4 768.9L1013.6 767.9L1012.7 765.6L1011.9 764.6L1011.1 764.3L1010.4 764.7L1009.7 765.8L1009.1 768.2L1008.4 769.3L1007.6 769.7L1006.9 769.4L1006.1 768.3L1005.2 766.1L1004.4 765.0L1003.7 764.7L1002.9 765.1L1002.2 766.2L1001.5 768.5L1000.8 769.6L1000.1 770.0L999.3 769.7L998.5 768.6L997.7 766.3L997.0 765.2L996.2 764.9L995.5 765.2L994.7 766.3L994.0 768.6L993.3 769.7L992.5 770.1L991.7 769.7L991.0 768.6L990.3 766.3L989.5 765.2L988.8 764.9L988.0 765.2L987.3 766.3L986.5 768.6L985.7 769.7L984.9 770.0L984.2 769.6L983.5 768.5L982.8 766.2L982.1 765.1L981.3 764.7L980.6 765.0L979.8 766.1L978.9 768.3L978.1 769.4L977.4 769.7L976.6 769.3L975.9 768.2L975.3 765.8L974.6 764.7L973.9 764.3L973.1 764.6L972.3 765.6L971.4 767.9L970.6 768.9L969.8 769.2L969.1 768.8L968.4 767.6L967.9 765.3L967.2 764.1L966.5 763.7L965.7 764.0L964.9 765.0L963.9 767.2L963.0 768.2L962.2 768.5L961.5 768.1L960.9 766.9L960.4 764.5L959.8 763.4L959.1 762.9L958.3 763.2L957.4 764.2L956.4 766.4L955.5 767.4L954.7 767.6L954.0 767.2L953.4 766.0L953.0 763.6L952.4 762.4L951.7 762.0L950.9 762.2L950.0 763.2L948.9 765.3L948.0 766.3L947.2 766.5L946.5 766.1L946.0 764.9L945.6 762.5L945.0 761.3L944.4 760.8L943.6 761.0L942.7 762.0L941.5 764.1L940.6 765.0L939.8 765.3L939.1 764.8L938.5 763.5L938.2 761.2L937.7 759.9L937.1 759.4L936.3 759.6L935.3 760.6L934.1 762.7L933.1 763.6L932.3 763.8L931.7 763.3L931.2 762.0L930.9 759.6L930.4 758.4L929.8 757.9L929.0 758.1L928.0 759.0L926.7 761.0L925.8 761.9L924.9 762.1L924.3 761.6L923.8 760.3L923.6 757.9L923.2 756.7L922.5 756.2L921.7 756.3L920.7 757.2L919.4 759.2L918.4 760.1L917.6 760.2L917.0 759.7L916.5 758.4L916.4 756.0L916.0 754.8L915.4 754.2L914.5 754.4L913.5 755.2L912.2 757.2L911.1 758.1L910.3 758.2L909.7 757.6L909.3 756.4L909.2 753.9L908.8 752.7L908.2 752.1L907.4 752.2L906.4 753.1L905.0 755.0L903.9 755.8L903.1 755.9L902.5 755.4L902.1 754.1L902.1 751.7L901.7 750.4L901.1 749.8L900.3 749.9L899.3 750.7L897.8 752.6L896.7 753.4L895.9 753.5L895.3 752.9L895.0 751.6L895.0 749.2L894.7 747.9L894.1 747.3L893.3 747.4L892.2 748.2L890.7 750.1L889.6 750.8L888.8 750.9L888.2 750.3L887.9 749.0L888.0 746.6L887.7 745.3L887.2 744.7L886.4 744.7L885.3 745.5L883.7 747.3L882.6 748.0L881.8 748.1L881.2 747.4L880.9 746.1L881.1 743.7L880.9 742.4L880.3 741.8L879.5 741.9L878.4 742.6L876.8 744.4L875.6 745.1L874.8 745.1L874.2 744.4L874.0 743.1L874.3 740.7L874.0 739.4L873.5 738.8L872.7 738.8L871.6 739.5L869.9 741.2L868.7 741.9L867.9 741.9L867.4 741.3L867.2 739.9L867.5 737.6L867.3 736.2L866.8 735.6L866.0 735.6L864.8 736.2L863.1 737.9L862.0 738.6L861.1 738.6L860.6 737.9L860.4 736.6L860.8 734.2L860.7 732.9L860.2 732.2L859.3 732.2L858.2 732.8L856.4 734.5L855.2 735.1L854.4 735.0L853.9 734.4L853.8 733.0L854.2 730.7L854.1 729.3L853.6 728.7L852.8 728.6L851.6 729.2L849.8 730.8L848.6 731.4L847.8 731.3L847.3 730.6L847.2 729.3L847.7 727.0L847.6 725.6L847.2 724.9L846.4 724.9L845.2 725.4L843.3 727.0L842.1 727.5L841.3 727.5L840.8 726.8L840.8 725.4L841.3 723.1L841.3 721.8L840.8 721.1L840.0 721.0L838.8 721.5L836.9 723.0L835.7 723.5L834.9 723.4L834.4 722.7L834.4 721.4L835.0 719.0L835.0 717.7L834.6 717.0L833.8 716.9L832.6 717.4L830.7 718.9L829.4 719.3L828.6 719.2L828.2 718.5L828.2 717.1L828.9 714.8L828.9 713.5L828.5 712.8L827.7 712.7L826.4 713.1L824.5 714.5L823.2 715.0L822.4 714.8L822.0 714.1L822.0 712.8L822.8 710.5L822.8 709.1L822.5 708.4L821.6 708.3L820.4 708.7L818.4 710.1L817.1 710.5L816.3 710.3L815.9 709.6L816.0 708.2L816.8 706.0L816.9 704.6L816.6 703.9L815.7 703.7L814.5 704.1L812.5 705.4L811.2 705.8L810.4 705.6L810.0 704.9L810.1 703.5L811.0 701.3L811.1 700.0L810.8 699.2L810.0 699.0L808.7 699.4L806.6 700.6L805.4 701.0L804.5 700.8L804.2 700.0L804.4 698.7L805.3 696.5L805.4 695.1L805.1 694.4L804.3 694.2L803.0 694.5L801.0 695.7L799.7 696.0L798.9 695.8L798.5 695.0L798.7 693.7L799.7 691.5L799.9 690.2L799.6 689.4L798.8 689.2L797.5 689.4L795.4 690.6L794.1 690.9L793.3 690.6L793.0 689.8L793.2 688.5L794.2 686.4L794.5 685.0L794.2 684.3L793.4 684.0L792.1 684.3L790.0 685.4L788.7 685.6L787.9 685.3L787.6 684.5L787.8 683.2L788.9 681.1L789.2 679.8L788.9 679.0L788.2 678.7L786.8 679.0L784.7 680.0L783.4 680.2L782.6 679.9L782.3 679.1L782.6 677.8L783.8 675.7L784.0 674.4L783.8 673.6L783.0 673.3L781.7 673.5L779.5 674.5L778.2 674.7L777.4 674.3L777.2 673.5L777.5 672.2L778.7 670.2L779.0 668.9L778.8 668.1L778.1 667.8L776.7 667.9L774.5 668.8L773.2 669.0L772.4 668.7L772.2 667.8L772.6 666.6L773.8 664.5L774.2 663.2L774.0 662.4L773.2 662.1L771.9 662.2L769.7 663.1L768.3 663.2L767.6 662.8L767.4 662.0L767.8 660.7L769.1 658.7L769.5 657.5L769.3 656.6L768.6 656.3L767.2 656.4L765.0 657.2L763.6 657.3L762.9 656.9L762.7 656.1L763.1 654.8L764.5 652.8L764.9 651.6L764.8 650.7L764.1 650.4L762.7 650.4L760.4 651.2L759.1 651.2L758.4 650.8L758.2 650.0L758.7 648.7L760.1 646.8L760.5 645.5L760.4 644.7L759.7 644.3L758.4 644.3L756.1 645.0L754.7 645.0L754.0 644.6L753.9 643.8L754.3 642.5L755.8 640.6L756.3 639.4L756.2 638.6L755.5 638.2L754.2 638.2L751.8 638.8L750.5 638.8L749.8 638.3L749.7 637.5L750.2 636.3L751.7 634.4L752.2 633.2L752.1 632.4L751.4 631.9L750.1 631.9L747.8 632.4L746.4 632.4L745.7 631.9L745.7 631.1L746.2 629.9L747.8 628.0L748.3 626.8L748.3 626.0L747.6 625.6L746.2 625.5L743.9 626.0L742.6 625.9L741.9 625.4L741.8 624.6L742.4 623.4L744.0 621.6L744.6 620.4L744.5 619.6L743.9 619.1L742.5 619.0L740.2 619.4L738.8 619.3L738.2 618.8L738.1 618.0L738.7 616.8L740.4 615.0L741.0 613.9L741.0 613.0L740.3 612.5L739.0 612.4L736.6 612.8L735.3 612.6L734.6 612.1L734.6 611.2L735.3 610.1L737.0 608.4L737.6 607.2L737.6 606.4L737.0 605.9L735.6 605.7L733.3 606.0L731.9 605.8L731.3 605.3L731.3 604.5L732.0 603.3L733.7 601.6L734.4 600.5L734.4 599.7L733.8 599.2L732.5 598.9L730.1 599.2L728.8 599.0L728.1 598.4L728.1 597.6L728.8 596.4L730.6 594.8L731.3 593.7L731.4 592.9L730.8 592.3L729.5 592.1L727.1 592.3L725.8 592.0L725.1 591.4L725.2 590.6L725.9 589.5L727.7 587.9L728.5 586.8L728.5 586.0L727.9 585.5L726.6 585.2L724.2 585.3L722.9 585.0L722.3 584.4L722.4 583.6L723.1 582.5L725.0 581.0L725.8 579.9L725.9 579.1L725.3 578.5L724.0 578.2L721.6 578.2L720.3 577.9L719.7 577.3L719.8 576.5L720.6 575.4L722.5 573.9L723.3 572.9L723.4 572.1L722.8 571.5L721.5 571.1L719.1 571.1L717.8 570.7L717.3 570.1L717.4 569.3L718.2 568.2L720.1 566.8L721.0 565.8L721.1 565.0L720.5 564.4L719.3 564.0L716.8 563.9L715.6 563.5L715.0 562.9L715.1 562.1L716.0 561.0L718.0 559.7L718.8 558.7L719.0 557.8L718.4 557.2L717.2 556.8L714.8 556.7L713.5 556.2L713.0 555.6L713.1 554.8L714.0 553.8L716.0 552.5L716.9 551.5L717.0 550.7L716.5 550.0L715.3 549.6L712.9 549.4L711.6 548.9L711.1 548.3L711.3 547.4L712.2 546.5L714.2 545.2L715.1 544.2L715.3 543.4L714.8 542.8L713.6 542.3L711.2 542.0L709.9 541.5L709.4 540.9L709.6 540.1L710.5 539.1L712.6 537.9L713.6 536.9L713.8 536.1L713.3 535.5L712.0 535.0L709.7 534.7L708.4 534.1L707.9 533.4L708.2 532.6L709.1 531.7L711.2 530.5L712.2 529.6L712.4 528.8L711.9 528.2L710.7 527.6L708.3 527.2L707.1 526.7L706.7 526.0L706.9 525.2L707.9 524.3L710.0 523.2L711.0 522.3L711.2 521.5L710.8 520.8L709.6 520.2L707.2 519.8L706.0 519.2L705.6 518.5L705.8 517.7L706.8 516.8L709.0 515.8L710.0 514.9L710.3 514.1L709.8 513.4L708.7 512.8L706.3 512.3L705.1 511.7L704.7 511.0L705.0 510.2L706.0 509.3L708.2 508.3L709.2 507.5L709.5 506.7L709.1 506.0L707.9 505.3L705.6 504.8L704.4 504.1L704.0 503.4L704.3 502.6L705.3 501.8L707.6 500.9L708.6 500.1L708.9 499.3L708.5 498.6L707.4 497.9L705.0 497.3L703.9 496.6L703.5 495.8L703.8 495.1L704.9 494.3L707.1 493.4L708.2 492.6L708.5 491.9L708.1 491.1L707.0 490.4L704.7 489.7L703.6 489.0L703.2 488.3L703.5 487.5L704.6 486.7L706.9 485.9L708.0 485.2L708.3 484.4L708.0 483.7L706.9 482.9L704.6 482.2L703.5 481.5L703.1 480.7L703.5 479.9L704.6 479.2L706.9 478.5L708.0 477.7L708.3 477.0L708.0 476.2L706.9 475.5L704.6 474.7L703.5 473.9L703.2 473.1L703.6 472.4L704.7 471.7L707.0 471.0L708.1 470.3L708.5 469.5L708.2 468.8L707.1 468.0L704.9 467.1L703.8 466.3L703.5 465.6L703.9 464.8L705.0 464.1L707.4 463.5L708.5 462.8L708.9 462.1L708.6 461.3L707.6 460.5L705.3 459.6L704.3 458.8L704.0 458.0L704.4 457.3L705.6 456.6L707.9 456.1L709.1 455.4L709.5 454.7L709.2 453.9L708.2 453.1L706.0 452.1L705.0 451.2L704.7 450.4L705.1 449.7L706.3 449.1L708.7 448.6L709.8 448.0L710.3 447.3L710.0 446.5L709.0 445.6L706.8 444.6L705.8 443.7L705.6 442.9L706.0 442.2L707.2 441.6L709.6 441.2L710.8 440.6L711.2 439.9L711.0 439.1L710.0 438.2L707.9 437.1L706.9 436.2L706.7 435.4L707.1 434.7L708.3 434.2L710.7 433.8L711.9 433.2L712.4 432.6L712.2 431.8L711.2 430.9L709.1 429.7L708.2 428.8L707.9 428.0L708.4 427.3L709.7 426.7L712.0 426.4L713.3 425.9L713.8 425.3L713.6 424.5L712.6 423.5L710.5 422.3L709.6 421.3L709.4 420.5L709.9 419.9L711.2 419.4L713.6 419.1L714.8 418.6L715.3 418.0L715.1 417.2L714.2 416.2L712.2 414.9L711.3 414.0L711.1 413.1L711.6 412.5L712.9 412.0L715.3 411.8L716.5 411.4L717.0 410.7L716.9 409.9L716.0 408.9L714.0 407.6L713.1 406.6L713.0 405.8L713.5 405.2L714.8 404.7L717.2 404.6L718.4 404.2L719.0 403.6L718.8 402.7L718.0 401.7L716.0 400.4L715.1 399.3L715.0 398.5L715.6 397.9L716.8 397.5L719.3 397.4L720.5 397.0L721.1 396.4L721.0 395.6L720.1 394.6L718.2 393.2L717.4 392.1L717.3 391.3L717.8 390.7L719.1 390.3L721.5 390.3L722.8 389.9L723.4 389.3L723.3 388.5L722.5 387.5L720.6 386.0L719.8 384.9L719.7 384.1L720.3 383.5L721.6 383.2L724.0 383.2L725.3 382.9L725.9 382.3L725.8 381.5L725.0 380.4L723.1 378.9L722.4 377.8L722.3 377.0L722.9 376.4L724.2 376.1L726.6 376.2L727.9 375.9L728.5 375.4L728.5 374.6L727.7 373.5L725.9 371.9L725.2 370.8L725.1 370.0L725.8 369.4L727.1 369.1L729.5 369.3L730.8 369.1L731.4 368.5L731.3 367.7L730.6 366.6L728.8 365.0L728.1 363.8L728.1 363.0L728.8 362.4L730.1 362.2L732.5 362.5L733.8 362.2L734.4 361.7L734.4 360.9L733.7 359.8L732.0 358.1L731.3 356.9L731.3 356.1L731.9 355.6L733.3 355.4L735.6 355.7L737.0 355.5L737.6 355.0L737.6 354.2L737.0 353.0L735.3 351.3L734.6 350.2L734.6 349.3L735.3 348.8L736.6 348.6L739.0 349.0L740.3 348.9L741.0 348.4L741.0 347.5L740.4 346.4L738.7 344.6L738.1 343.4L738.2 342.6L738.8 342.1L740.2 342.0L742.5 342.4L743.9 342.3L744.5 341.8L744.6 341.0L744.0 339.8L742.4 338.0L741.8 336.8L741.9 336.0L742.6 335.5L743.9 335.4L746.2 335.9L747.6 335.8L748.3 335.4L748.3 334.6L747.8 333.4L746.2 331.5L745.7 330.3L745.7 329.5L746.4 329.0L747.8 329.0L750.1 329.5L751.4 329.5L752.1 329.0L752.2 328.2L751.7 327.0L750.2 325.1L749.7 323.9L749.8 323.1L750.5 322.6L751.8 322.6L754.2 323.2L755.5 323.2L756.2 322.8L756.3 322.0L755.8 320.8L754.3 318.9L753.9 317.6L754.0 316.8L754.7 316.4L756.1 316.4L758.4 317.1L759.7 317.1L760.4 316.7L760.5 315.9L760.1 314.6L758.7 312.7L758.2 311.4L758.4 310.6L759.1 310.2L760.4 310.2L762.7 311.0L764.1 311.0L764.8 310.7L764.9 309.8L764.5 308.6L763.1 306.6L762.7 305.3L762.9 304.5L763.6 304.1L765.0 304.2L767.2 305.0L768.6 305.1L769.3 304.8L769.5 303.9L769.1 302.7L767.8 300.7L767.4 299.4L767.6 298.6L768.3 298.2L769.7 298.3L771.9 299.2L773.2 299.3L774.0 299.0L774.2 298.2L773.8 296.9L772.6 294.8L772.2 293.6L772.4 292.7L773.2 292.4L774.5 292.6L776.7 293.5L778.1 293.6L778.8 293.3L779.0 292.5L778.7 291.2L777.5 289.2L777.2 287.9L777.4 287.1L778.2 286.7L779.5 286.9L781.7 287.9L783.0 288.1L783.8 287.8L784.0 287.0L783.8 285.7L782.6 283.6L782.3 282.3L782.6 281.5L783.4 281.2L784.7 281.4L786.8 282.4L788.2 282.7L788.9 282.4L789.2 281.6L788.9 280.3L787.8 278.2L787.6 276.9L787.9 276.1L788.7 275.8L790.0 276.0L792.1 277.1L793.4 277.4L794.2 277.1L794.5 276.4L794.2 275.0L793.2 272.9L793.0 271.6L793.3 270.8L794.1 270.5L795.4 270.8L797.5 272.0L798.8 272.2L799.6 272.0L799.9 271.2L799.7 269.9L798.7 267.7L798.5 266.4L798.9 265.6L799.7 265.4L801.0 265.7L803.0 266.9L804.3 267.2L805.1 267.0L805.4 266.3L805.3 264.9L804.4 262.7L804.2 261.4L804.5 260.6L805.4 260.4L806.6 260.8L808.7 262.0L810.0 262.4L810.8 262.2L811.1 261.4L811.0 260.1L810.1 257.9L810.0 256.5L810.4 255.8L811.2 255.6L812.5 256.0L814.5 257.3L815.7 257.7L816.6 257.5L816.9 256.8L816.8 255.4L816.0 253.2L815.9 251.8L816.3 251.1L817.1 250.9L818.4 251.3L820.4 252.7L821.6 253.1L822.5 253.0L822.8 252.3L822.8 250.9L822.0 248.6L822.0 247.3L822.4 246.6L823.2 246.4L824.5 246.9L826.4 248.3L827.7 248.7L828.5 248.6L828.9 247.9L828.9 246.6L828.2 244.3L828.2 242.9L828.6 242.2L829.4 242.1L830.7 242.5L832.6 244.0L833.8 244.5L834.6 244.4L835.0 243.7L835.0 242.4L834.4 240.0L834.4 238.7L834.9 238.0L835.7 237.9L836.9 238.4L838.8 239.9L840.0 240.4L840.8 240.3L841.3 239.6L841.3 238.3L840.8 236.0L840.8 234.6L841.3 233.9L842.1 233.9L843.3 234.4L845.2 236.0L846.4 236.5L847.2 236.5L847.6 235.8L847.7 234.4L847.2 232.1L847.3 230.8L847.8 230.1L848.6 230.0L849.8 230.6L851.6 232.2L852.8 232.8L853.6 232.7L854.1 232.1L854.2 230.7L853.8 228.4L853.9 227.0L854.4 226.4L855.2 226.3L856.4 226.9L858.2 228.6L859.3 229.2L860.2 229.2L860.7 228.5L860.8 227.2L860.4 224.8L860.6 223.5L861.1 222.8L862.0 222.8L863.1 223.5L864.8 225.2L866.0 225.8L866.8 225.8L867.3 225.2L867.5 223.8L867.2 221.5L867.4 220.1L867.9 219.5L868.7 219.5L869.9 220.2L871.6 221.9L872.7 222.6L873.5 222.6L874.0 222.0L874.3 220.7L874.0 218.3L874.2 217.0L874.8 216.3L875.6 216.3L876.8 217.0L878.4 218.8L879.5 219.5L880.3 219.6L880.9 219.0L881.1 217.7L880.9 215.3L881.2 214.0L881.8 213.3L882.6 213.4L883.7 214.1L885.3 215.9L886.4 216.7L887.2 216.7L887.7 216.1L888.0 214.8L887.9 212.4L888.2 211.1L888.8 210.5L889.6 210.6L890.7 211.3L892.2 213.2L893.3 214.0L894.1 214.1L894.7 213.5L895.0 212.2L895.0 209.8L895.3 208.5L895.9 207.9L896.7 208.0L897.8 208.8L899.3 210.7L900.3 211.5L901.1 211.6L901.7 211.0L902.1 209.7L902.1 207.3L902.5 206.0L903.1 205.5L903.9 205.6L905.0 206.4L906.4 208.3L907.4 209.2L908.2 209.3L908.8 208.7L909.2 207.5L909.3 205.0L909.7 203.8L910.3 203.2L911.1 203.3L912.2 204.2L913.5 206.2L914.5 207.0L915.4 207.2L916.0 206.6L916.4 205.4L916.5 203.0L917.0 201.7L917.6 201.2L918.4 201.3L919.4 202.2L920.7 204.2L921.7 205.1L922.5 205.2L923.2 204.7L923.6 203.5L923.8 201.1L924.3 199.8L924.9 199.3L925.8 199.5L926.7 200.4L928.0 202.4L929.0 203.3L929.8 203.5L930.4 203.0L930.9 201.8L931.2 199.4L931.7 198.1L932.3 197.6L933.1 197.8L934.1 198.7L935.3 200.8L936.3 201.8L937.1 202.0L937.7 201.5L938.2 200.2L938.5 197.9L939.1 196.6L939.8 196.1L940.6 196.4L941.5 197.3L942.7 199.4L943.6 200.4L944.4 200.6L945.0 200.1L945.6 198.9L946.0 196.5L946.5 195.3L947.2 194.9L948.0 195.1L948.9 196.1L950.0 198.2L950.9 199.2L951.7 199.4L952.4 199.0L953.0 197.8L953.4 195.4L954.0 194.2L954.7 193.8L955.5 194.0L956.4 195.0L957.4 197.2L958.3 198.2L959.1 198.5L959.8 198.0L960.4 196.9L960.9 194.5L961.5 193.3L962.2 192.9L963.0 193.2L963.9 194.2L964.9 196.4L965.7 197.4L966.5 197.7L967.2 197.3L967.9 196.1L968.4 193.8L969.1 192.6L969.8 192.2L970.6 192.5L971.4 193.5L972.3 195.8L973.1 196.8L973.9 197.1L974.6 196.7L975.3 195.6L975.9 193.2L976.6 192.1L977.4 191.7L978.1 192.0L978.9 193.1L979.8 195.3L980.6 196.4L981.3 196.7L982.1 196.3L982.8 195.2L983.5 192.9L984.2 191.8L984.9 191.4L985.7 191.7L986.5 192.8L987.3 195.1L988.0 196.2L988.8 196.5L989.5 196.2L990.3 195.1L991.0 192.8L991.7 191.7Z" fill="none" stroke="#000" stroke-width="1.6"/>
<path d="M992.5 153.89999999999998V807.5" stroke="#000" stroke-width="2"/>
<circle cx="992.5" cy="480.7" r="8.05" fill="none" stroke="#bdbdbd" stroke-width="3.5"/>
<path d="M4 480.5H1521" stroke="#aaaefb" stroke-width="1" opacity="0"/>
<path d="M982.8 480.5H1002.2" stroke="#a6aaf5" stroke-width="1"/>
<path d="M992.5 193.89999999999998V767.5" stroke="#000" stroke-width="3"/>
<circle cx="992.5" cy="480.7" r="4.4" fill="#000" stroke="#8fd06a" stroke-width="1.6"/>
</svg>
<!-- tab bar -->
<div class="a" style="left:0;top:0;width:1525px;height:32px;background:#cbcbcb"></div>
<div class="a" style="left:0;top:0;width:2px;height:1103px;background:#efefef"></div>
<!-- grid icon -->
<svg class="a" style="left:11px;top:9px" width="14" height="14"><g fill="#5f5f5f"><rect x="0" y="0" width="4" height="4" rx="0.6"/><rect x="5" y="0" width="4" height="4" rx="0.6"/><rect x="10" y="0" width="4" height="4" rx="0.6"/><rect x="0" y="5" width="4" height="4" rx="0.6"/><rect x="5" y="5" width="4" height="4" rx="0.6"/><rect x="10" y="5" width="4" height="4" rx="0.6"/><rect x="0" y="10" width="4" height="4" rx="0.6"/><rect x="5" y="10" width="4" height="4" rx="0.6"/><rect x="10" y="10" width="4" height="4" rx="0.6"/></g></svg>
<!-- file icon -->
<svg class="a" style="left:44px;top:8px" width="28" height="17"><path d="M0.5 1.2Q0.5 0 1.7 0H9L13 4V15.5Q13 16.5 12 16.5H1.5Q0.5 16.5 0.5 15.5Z" fill="#636363"/><path d="M9.5 0L13 3.5H9.5Z" fill="#cbcbcb"/><path d="M19 5.5H26L22.5 9.5Z" fill="#636363"/></svg>
<!-- save icon -->
<svg class="a" style="left:89px;top:9px" width="15" height="14"><path d="M1 0H13Q14 0 14 1V13Q14 14 13 14H3L0 11V1Q0 0 1 0Z" fill="#636363"/><rect x="3.5" y="1" width="7" height="4" fill="#cbcbcb"/><rect x="4.5" y="1" width="5" height="3" fill="#636363"/><rect x="3.5" y="8" width="7" height="6" fill="#cbcbcb"/><rect x="5" y="9.5" width="4" height="4.5" fill="#636363"/></svg>
<!-- undo -->
<svg class="a" style="left:121px;top:9px" width="32" height="15"><path d="M3 6H9Q13.5 6 13.5 10.5V13.5" fill="none" stroke="#636363" stroke-width="2.2" stroke-linecap="round"/><path d="M6.5 2L2.2 6L6.5 10" fill="none" stroke="#636363" stroke-width="2.2" stroke-linecap="round" stroke-linejoin="round"/><path d="M21 4.5H28L24.5 8.5Z" fill="#636363"/></svg>
<!-- redo -->
<svg class="a" style="left:161px;top:9px" width="32" height="15"><path d="M11 6H6Q1.5 6 1.5 10.5V13" fill="none" stroke="#8c8c8c" stroke-width="2" stroke-linecap="round"/><path d="M8 2L12.3 6L8 10" fill="none" stroke="#8c8c8c" stroke-width="2" stroke-linecap="round" stroke-linejoin="round"/><path d="M20 4.5H27L23.5 8.5Z" fill="#8c8c8c"/></svg>
<!-- home tab -->
<div class="tab" style="left:196px;width:39px;background:#bababa"></div>
<svg class="a" style="left:209px;top:12px" width="15" height="14"><path d="M7.5 0.5L0 7.5H2V13.5H6V9.5H9V13.5H13V7.5H15L12 4.7V1.5H10.5V3.3Z" fill="#7e7e7e"/></svg>
<!-- inactive doc tab -->
<div class="tab" style="left:239px;width:508px;background:#bcbcbc"></div>
<svg class="a" style="left:424px;top:11px" width="16" height="17"><path d="M8 0.5L15 4.2V12.3L8 16.2L1 12.3V4.2Z" fill="#ff8f3a"/><path d="M8 0.5L15 4.2L8 8L1 4.2Z" fill="#ffb878"/><path d="M8 8L15 4.2V12.3L8 16.2Z" fill="#f26a0c"/></svg>
<div class="t" style="left:444px;top:13px;font-size:12.5px;color:#5e5e5e;letter-spacing:-0.35px">Segmenty tocny v6*</div>
<svg class="a" style="left:731px;top:13px" width="10" height="10"><path d="M1 1L9 9M9 1L1 9" stroke="#717171" stroke-width="1.4"/></svg>
<!-- active doc tab -->
<div class="tab" style="left:751px;width:508px;background:#f1f1f1"></div>
<svg class="a" style="left:944px;top:11px" width="16" height="17"><path d="M8 0.5L15 4.2V12.3L8 16.2L1 12.3V4.2Z" fill="#ff8f3a"/><path d="M8 0.5L15 4.2L8 8L1 4.2Z" fill="#ffb878"/><path d="M8 8L15 4.2V12.3L8 16.2Z" fill="#f26a0c"/></svg>
<div class="t" style="left:965px;top:13px;font-size:12.5px;color:#3a3a3a;letter-spacing:-0.15px">internal gear v1*</div>
<svg class="a" style="left:1243px;top:13px" width="10" height="10"><path d="M1 1L9 9M9 1L1 9" stroke="#6a6a6a" stroke-width="1.3"/></svg>
<!-- plus tab -->
<div class="tab" style="left:1263px;width:28px;background:#bababa"></div>
<svg class="a" style="left:1271px;top:11px" width="13" height="13"><path d="M6.5 0V13M0 6.5H13" stroke="#777" stroke-width="2.8"/></svg>
<!-- job status -->
<svg class="a" style="left:1302px;top:8px" width="20" height="17"><path d="M1 0.5H9.5V9L5 14V15.5H1Z" fill="#666"/><path d="M10.5 0.5L13.5 3.8H10.5Z" fill="#666"/><path d="M6.5 16L7.5 12.5L14.5 5.5L17 8L10 15Z" fill="#666" stroke="#cbcbcb" stroke-width="0.9" stroke-linejoin="round"/></svg>
<div class="t" style="left:1321px;top:10px;font-size:12px;color:#333;letter-spacing:-0.25px">9 of 10</div>
<!-- clock -->
<svg class="a" style="left:1379px;top:8px" width="18" height="17"><circle cx="8.5" cy="8.5" r="7.6" fill="none" stroke="#666" stroke-width="1.4"/><circle cx="8.5" cy="8.5" r="5.8" fill="none" stroke="#666" stroke-width="1"/><path d="M8.5 4.5V8.8H11.5" fill="none" stroke="#666" stroke-width="1.4"/></svg>
<!-- bell -->
<svg class="a" style="left:1413px;top:7px" width="16" height="18"><path d="M8 1.5Q12.5 1.5 12.5 7V11L14.5 13.5H1.5L3.5 11V7Q3.5 1.5 8 1.5Z" fill="#666"/><circle cx="8" cy="15.3" r="1.8" fill="#666"/></svg>
<!-- help -->
<svg class="a" style="left:1445px;top:8px" width="18" height="17"><circle cx="8.5" cy="8.5" r="8.2" fill="#666"/><path d="M5.8 6.3Q5.8 3.8 8.6 3.8Q11.3 3.8 11.3 6.2Q11.3 7.5 9.8 8.3Q8.7 8.9 8.7 10.2" fill="none" stroke="#cbcbcb" stroke-width="2"/><circle cx="8.7" cy="12.8" r="1.2" fill="#cbcbcb"/></svg>
<!-- avatar -->
<div class="a" style="left:1483px;top:4px;width:24px;height:24px;border-radius:12px;background:#efefef"></div>
<div class="t" style="left:1486px;top:10px;font-size:12px;color:#333;letter-spacing:-0.4px">ZV</div>
<!-- right edge -->
<div class="a" style="left:1521px;top:0;width:1px;height:1103px;background:#f4f4f4"></div>
<div class="a" style="left:1522px;top:0;width:3px;height:35px;background:#cfcfcf"></div>
<div class="a" style="left:1522px;top:35px;width:3px;height:1058px;background:#000"></div>
<div class="a" style="left:1522px;top:1093px;width:3px;height:10px;background:#bdbdbd"></div>

<!-- toolbar -->
<div class="a" style="left:13px;top:42px;width:111px;height:62px;border:2px solid #dfdfdf;border-radius:6px;background:#f2f2f2"></div>
<div class="t" style="left:44px;top:67px;font-size:10.5px;font-weight:normal;color:#2a2a2a;letter-spacing:-0.4px;-webkit-text-stroke:0.4px #2a2a2a">DESIGN<span class="tri" style="border-top-color:#333;margin-left:5px"></span></div>
<div class="t" style="left:153px;top:39px;font-size:10px;color:#0a90d8;letter-spacing:0px;-webkit-text-stroke:0.25px #0a90d8">SOLID</div>
<div class="a" style="left:140px;top:52px;width:57px;height:3px;background:#0696d7;border-radius:1px"></div>
<div class="t" style="left:230px;top:39px;font-size:10px;color:#3d3d3d;letter-spacing:-0.1px">SURFACE</div>
<div class="t" style="left:323px;top:39px;font-size:10px;color:#3d3d3d;letter-spacing:-0.1px">MESH</div>
<div class="t" style="left:396px;top:39px;font-size:10px;color:#3d3d3d;letter-spacing:-0.1px">SHEET METAL</div>
<div class="t" style="left:509px;top:39px;font-size:10px;color:#3d3d3d;letter-spacing:-0.1px">PLASTIC</div>
<div class="t" style="left:597px;top:39px;font-size:10px;color:#3d3d3d;letter-spacing:-0.1px">UTILITIES</div>
<!-- group labels -->
<div class="t" style="left:237px;top:99px;font-size:10px;color:#3d3d3d;letter-spacing:-0.1px">CREATE<span class="tri"></span></div>
<div class="t" style="left:505px;top:99px;font-size:10px;color:#3d3d3d;letter-spacing:-0.1px">MODIFY<span class="tri"></span></div>
<div class="t" style="left:681px;top:99px;font-size:10px;color:#3d3d3d;letter-spacing:-0.1px">ASSEMBLE<span class="tri"></span></div>
<div class="t" style="left:776px;top:99px;font-size:10px;color:#3d3d3d;letter-spacing:-0.1px">CONSTRUCT<span class="tri"></span></div>
<div class="t" style="left:875px;top:99px;font-size:10px;color:#3d3d3d;letter-spacing:-0.1px">INSPECT<span class="tri"></span></div>
<div class="t" style="left:954px;top:99px;font-size:10px;color:#3d3d3d;letter-spacing:-0.1px">INSERT<span class="tri"></span></div>
<div class="t" style="left:1023px;top:99px;font-size:10px;color:#3d3d3d;letter-spacing:-0.1px">SELECT<span class="tri"></span></div>
<div class="sep" style="left:395px"></div>
<div class="sep" style="left:665px"></div>
<div class="sep" style="left:761px"></div>
<div class="sep" style="left:861px"></div>
<div class="sep" style="left:940px"></div>
<div class="sep" style="left:1009px"></div>
<div class="a" style="left:2px;top:113px;width:1520px;height:1px;background:#dadada"></div>
<!-- CREATE icons -->
<svg class="a" style="left:135px;top:55px" width="260" height="40">
 <!-- sketch -->
 <g fill="#595959"><rect x="4" y="4" width="3" height="3"/><rect x="31" y="4" width="3" height="3"/><rect x="4" y="31" width="3" height="3"/><rect x="11" y="11" width="3" height="3"/><rect x="24" y="11" width="3" height="3"/><rect x="11" y="24" width="3" height="3"/></g>
 <path d="M8.5 5.5H30M5.5 8V30M32.5 8V21M8.5 32.5H21M15 12.5H23M12.5 15V23M15 25.5Q24 24 25.5 15" fill="none" stroke="#595959" stroke-width="1"/>
 <path d="M29 22.5V35.5M22.5 29H35.5" stroke="#1fa54a" stroke-width="3.6"/>
 <!-- extrude -->
 <path d="M48 10L54 4H72V29L66 35H48Z" fill="#6aafe5"/>
 <path d="M48 10L54 4H72L66 10Z" fill="#8dcafb"/>
 <path d="M66 10L72 4V24L66 30Z" fill="#4592cf"/>
 <path d="M48 31H66L72 25V30L66 36H48Z" fill="#b3b3b3"/>
 <path d="M75.5 30V6" stroke="#2b2b2b" stroke-width="1.2"/><path d="M72.5 9.5L75.5 4L78.5 9.5Z" fill="#2b2b2b"/>
 <!-- revolve -->
 <path d="M91 22Q105 6 122 22L122 29L116 35Q104 26 96 33L90 27Z" fill="#6aafe5"/>
 <path d="M90 17Q105 3 121 17L114 21Q104 14 96 22Z" fill="#8dcafb"/>
 <path d="M90 17L96 22V33L90 27Z" fill="#4592cf"/>
 <path d="M116 23L122 18V29L116 35Z" fill="#fff" stroke="#333" stroke-width="1"/>
 <path d="M94 9.5Q106 0 119 7.5" fill="none" stroke="#333" stroke-width="1"/><path d="M91 11.5L97 6.8L97.5 11Z" fill="#333"/>
 <!-- hole -->
 <path d="M133.5 10L139.5 4.5H164.5V30L158.5 36H133.5Z" fill="#d8d8d8" stroke="#555" stroke-width="1"/>
 <path d="M134 10L140 5H164L158 10Z" fill="#f4f4f4"/>
 <path d="M158.5 10.5L164 5V30L158.5 35.5Z" fill="#bdbdbd"/>
 <path d="M133.5 10H158.5V36M158.5 10L164.5 4.5" fill="none" stroke="#555" stroke-width="1" opacity="0"/>
 <circle cx="146.5" cy="22" r="8" fill="#f0f0f0" stroke="#555" stroke-width="1"/>
 <path d="M140 17Q139 28 147 28.5Q152 28.5 153.5 24Q146 26 144.5 15.5Q141.5 15.5 140 17Z" fill="#6aafe5"/>
 <!-- rect pattern -->
 <rect x="176.5" y="6.5" width="6" height="6" fill="#fff" stroke="#555" stroke-width="1"/>
 <rect x="197" y="6" width="7" height="7" fill="#5fa8e2"/><rect x="176" y="27" width="7" height="7" fill="#5fa8e2"/><rect x="197" y="27" width="7" height="7" fill="#5fa8e2"/>
 <path d="M184 9.5H196M179.5 14V26M184 30.5H196" stroke="#555" stroke-width="1"/>
 <!-- form -->
 <path d="M226 6.5H242Q251 6.5 251 16V27L243 36H226Q219 36 219 29V14Q219 6.5 226 6.5Z" fill="#a77fe3" stroke="#9a6fd8" stroke-width="0.8"/>
 <path d="M226 7H242Q249 7 250 13H220Q221 7 226 7Z" fill="#c9a6f6"/>
 <path d="M220 24H250M234 7.5V35.5" stroke="#8a5fcd" stroke-width="0.9"/>
 <path d="M245 16L251 19V27L245 33Z" fill="#8e63d2"/>
 <path d="M242.5 3.5L244.3 8.5L248.8 5.8L247.2 10.6L252.5 11.8L247.6 14L250.5 18.8L245.6 16.8L244 22L242 17L237.6 19.5L239.4 14.5L234.5 12.5L239.6 11L237.4 6.2L241.8 8.6Z" fill="#f6a800" stroke="#fff" stroke-width="0.8"/>
</svg>
<!-- MODIFY icons -->
<svg class="a" style="left:400px;top:55px" width="260" height="40">
 <path d="M9.5 35.5V10L15.5 4.5H20V35.5Z" fill="#d9d9d9" stroke="#555" stroke-width="1"/>
 <path d="M16 10L22 4H31V30L25 36H16Z" fill="#6aafe5"/>
 <path d="M16 10L22 4H31L25 10Z" fill="#8dcafb"/>
 <path d="M25 10L31 4V30L25 36Z" fill="#4592cf"/>
 <path d="M29 19.5H35" stroke="#2b2b2b" stroke-width="1.2"/><path d="M34 16.5L38.5 19.5L34 22.5Z" fill="#2b2b2b"/>
 <!-- fillet -->
 <path d="M51.5 35.5V11L58 4.5H68Q76 4.5 82.5 18V29L76 35.5Z" fill="#d9d9d9" stroke="#555" stroke-width="1"/>
 <path d="M52 11L58 5H67L64 11Z" fill="#f4f4f4"/>
 <path d="M76 24L82 19V29L76 35Z" fill="#b9b9b9"/>
 <path d="M63 10.5L68.5 4.8Q78 6 82.5 17.8L76 24Q73 12 63 10.5Z" fill="#6aafe5"/>
 <!-- shell -->
 <path d="M94.5 35.5V11L101 4.5H125.5V29L119 35.5Z" fill="#d9d9d9" stroke="#555" stroke-width="1"/>
 <path d="M95 11L101 5H125L119 11Z" fill="#f4f4f4"/>
 <path d="M119 11L125 5V29L119 35Z" fill="#bdbdbd"/>
 <rect x="97.5" y="15" width="17" height="17" fill="#f4f4f4"/>
 <path d="M98 16H106V24.5H114V31H98Z" fill="#8dcafb"/><path d="M98 16H106V24.5L98 31Z" fill="#4592cf"/>
 <!-- combine -->
 <path d="M137 18H147.6V8H165V25.5H155V36H137Z" fill="#6aafe5"/>
 <path d="M147.6 8L152.5 4H169L165 8Z" fill="#8dcafb"/>
 <path d="M165 8L169 4V21.5L165 25.5Z" fill="#4592cf"/>
 <path d="M137 18L141 14H147.6V18Z" fill="#8dcafb"/>
 <path d="M155 25.5H159.5V32L155 36Z" fill="#4592cf"/>
 <!-- split -->
 <path d="M182 10.5L188 4.5H210V14L204 19.5H182Z" fill="#6aafe5"/>
 <path d="M182 10.5L188 4.5H210L204 10.5Z" fill="#8dcafb"/>
 <path d="M204 10.5L210 4.5V14L204 19.5Z" fill="#4592cf"/>
 <path d="M180 22.5H204L212.5 14.5" fill="none" stroke="#1a86dd" stroke-width="1"/>
 <path d="M182.5 35V25H204.5L210.5 21V30L204.5 35Z" fill="#d9d9d9" stroke="#555" stroke-width="1"/>
 <path d="M204.5 25L210 21V30L204.5 35Z" fill="#bdbdbd"/>
 <!-- move -->
 <path d="M239 7V33M226 20H252" stroke="#333" stroke-width="1.6"/>
 <path d="M239 4L234 12H244Z M239 36L234 28H244Z M223 20L231 15V25Z M255 20L247 15V25Z" fill="#333"/>
</svg>
<!-- ASSEMBLE / CONSTRUCT -->
<svg class="a" style="left:670px;top:55px" width="170" height="40">
 <path d="M7.5 24.5H19.5V35.5H7.5Z" fill="#d9d9d9" stroke="#555" stroke-width="1"/>
 <path d="M19.5 24.5L23 21H34.5V32L31 35.5H19.5Z" fill="#d9d9d9" stroke="#555" stroke-width="1" stroke-linejoin="round"/>
 <path d="M20 24.5L23.2 21.5H34L31 24.5Z" fill="#f5f5f5"/>
 <path d="M31 25L34 22V31.8L31 35Z" fill="#bdbdbd"/>
 <path d="M7 13.5L10.5 10H22V20.5L19 24H7Z" fill="#6aafe5"/><path d="M7 13.5L10.5 10H22L19 13.5Z" fill="#8dcafb"/><path d="M19 13.5L22 10V20.5L19 24Z" fill="#4592cf"/>
 <path d="M30 4L31.7 9.4L36.4 6.6L34.3 11.3L39.5 12.8L34.3 14.5L36.4 19.2L31.7 16.4L30 21.8L28.3 16.4L23.6 19.2L25.7 14.5L20.5 12.8L25.7 11.3L23.6 6.6L28.3 9.4Z" fill="#f6a800"/>
 <path d="M52.5 37.5V14.5L58.5 7.5H63V22H60V31.5Z" fill="#cfcfcf" stroke="#555" stroke-width="1"/>
 <path d="M59 7.5Q63 6 64 9V21H59Z" fill="#e0e0e0" stroke="#555" stroke-width="0.8"/>
 <path d="M73 8.5L78.5 14.5V37.5L71.5 31V27H66V19L71 17V8.5Z" fill="#d9d9d9" stroke="#555" stroke-width="1"/>
 <path d="M61 22V27M70 12.5V17" stroke="#1a86dd" stroke-width="1"/>
 <!-- construct -->
 <path d="M127.5 34.5V8L134.5 4.5H143L136 11V34.5Z" fill="#d9d9d9" stroke="#555" stroke-width="1"/>
 <path d="M128 8.5L135 4.8H142.5L136 10.5H128Z" fill="#f4f4f4"/>
 <path d="M136 11L143.5 4.5V27.5L136 34.5Z" fill="#5ec47c"/>
 <path d="M148 14L157 4.5V27.5L148 34.5Z" fill="#e39a66"/>
</svg>
<!-- INSPECT / INSERT / SELECT -->
<svg class="a" style="left:880px;top:55px" width="190" height="40">
 <path d="M7.5 12V21M34.5 12V21" stroke="#555" stroke-width="1"/>
 <path d="M9 16.5H33" stroke="#555" stroke-width="1.2"/>
 <path d="M8.5 16.5L12.5 13.5V19.5Z M33.5 16.5L29.5 13.5V19.5Z" fill="#555"/>
 <rect x="7" y="22.5" width="28" height="5.5" fill="#f6a800"/>
 <path d="M10.5 22.5V24.5M14 22.5V24.5M17.5 22.5V24.5M21 22.5V24.5M24.5 22.5V24.5M28 22.5V24.5M31.5 22.5V24.5" stroke="#7a5a00" stroke-width="0.8"/>
 <rect x="80" y="5" width="29" height="29" fill="#8ac9fb"/>
 <path d="M80.5 33.5V20Q87 9 93 18Q97 25 99 27Q103 22 108.5 26V33.5Z" fill="#3f8fcb"/>
 <rect x="80.5" y="5.5" width="28" height="28" fill="none" stroke="#3f8fcb" stroke-width="1"/>
 <circle cx="101" cy="13" r="3" fill="#fbf7c8"/>
 <rect x="151.5" y="4.5" width="27" height="21" fill="none" stroke="#2fae4b" stroke-width="1.2" stroke-dasharray="3,2"/>
 <path d="M172.5 18.5V31.5L175.5 28.5L178 34.5L180 33.5L177.5 28H182Z" fill="#fff" stroke="#2b2b2b" stroke-width="1"/>
</svg>
<!-- BROWSER -->
<div class="a" style="left:6px;top:121px;width:300px;height:25px;background:#f1f1f1;border:1px solid #c9c9c9"></div>
<svg class="a" style="left:10px;top:130px" width="12" height="8"><path d="M0.5 4L5.5 0.5V7.5Z M5.5 4L10.5 0.5V7.5Z" fill="#333"/></svg>
<div class="t" style="left:31px;top:128px;font-size:10.5px;color:#5c5c5c;letter-spacing:-0.5px">BROWSER</div>
<svg class="a" style="left:284px;top:128px" width="22" height="12"><circle cx="5.6" cy="5.4" r="4.6" fill="#2a2a2a"/><path d="M3 5.4H8.2" stroke="#f1f1f1" stroke-width="1.4"/><path d="M17.5 0.5V11M19.5 2.5V9" stroke="#666" stroke-width="1"/></svg>
<!-- root row -->
<div class="a" style="left:42px;top:151px;width:176px;height:19px;background:#f1f1f1"></div>
<div class="a" style="left:67px;top:153px;width:126px;height:16px;background:#9b9b9b"></div>
<svg class="a" style="left:22px;top:155px" width="13" height="13"><defs><linearGradient id="tg" x1="0" y1="1" x2="1" y2="0"><stop offset="0" stop-color="#555"/><stop offset="1" stop-color="#ddd"/></linearGradient></defs><path d="M1.5 11.5L11.5 1.5V11.5Z" fill="url(#tg)" stroke="#111" stroke-width="1.2"/></svg>
<svg class="a" style="left:45px;top:155px" width="17" height="12"><path d="M0.5 6Q8.5 -3.5 16.5 6Q8.5 15.5 0.5 6Z" fill="#9d9d9d"/><circle cx="8" cy="6" r="3" fill="#f1f1f1"/><circle cx="8" cy="6" r="1.9" fill="#9d9d9d"/></svg>
<svg class="a" style="left:69px;top:152px" width="18" height="18"><path d="M1.5 4.5L4.5 1.5H10.5V7H16.5V14L14 16.5H1.5Z" fill="#e6e8ec" stroke="#1a1a1a" stroke-width="1.2" stroke-linejoin="round"/><path d="M8.5 4.5V7M10.5 7L8 9.5V16.5M8 9.5H14.5L16.5 7.5M14.5 9.5V16" fill="none" stroke="#1a1a1a" stroke-width="0.6" opacity="0.35"/><path d="M10.5 7L8 9.5V16.5" fill="none" stroke="#1a1a1a" stroke-width="1.1"/><rect x="2.5" y="5" width="5" height="4" fill="#d5d9e0"/><rect x="9" y="10" width="5" height="5.5" fill="#d5d9e0"/></svg>
<div class="t" style="left:100px;top:156px;font-size:11.5px;font-weight:bold;color:#fff;letter-spacing:-0.1px">internal gear v1</div>
<svg class="a" style="left:196px;top:154px" width="15" height="15"><circle cx="7.5" cy="7.5" r="6" fill="none" stroke="#222" stroke-width="1.3"/><circle cx="7.5" cy="7.5" r="2.5" fill="#222"/></svg>
<!-- child rows -->
<div class="a" style="left:60px;top:175px;width:134px;height:20px;background:#f1f1f1"></div>
<div class="a" style="left:60px;top:199px;width:110px;height:20px;background:#f1f1f1"></div>
<div class="a" style="left:60px;top:223px;width:95px;height:20px;background:#f1f1f1"></div>
<div class="a" style="left:60px;top:247px;width:115px;height:20px;background:#f1f1f1"></div>
<div class="a" style="left:60px;top:271px;width:195px;height:20px;background:#f1f1f1"></div>
<svg class="a" style="left:40px;top:178px" width="14" height="110"><g fill="#dedede" stroke="#2a2a2a" stroke-width="1.3" stroke-linejoin="round"><path d="M2.5 1.5L10.5 7.5L2.5 13Z"/><path d="M2.5 25.5L10.5 31.5L2.5 37Z"/><path d="M2.5 49.5L10.5 55.5L2.5 61Z"/><path d="M2.5 73.5L10.5 79.5L2.5 85Z"/><path d="M2.5 97.5L10.5 103.5L2.5 109Z"/></g></svg>
<!-- gear icon -->
<svg class="a" style="left:62px;top:177px" width="17" height="17"><g fill="#8a8a8a"><circle cx="8.5" cy="8.5" r="5.6"/><rect x="7" y="0.5" width="3" height="16"/><rect x="0.5" y="7" width="16" height="3"/><rect x="7" y="0.5" width="3" height="16" transform="rotate(45 8.5 8.5)"/><rect x="7" y="0.5" width="3" height="16" transform="rotate(-45 8.5 8.5)"/></g><circle cx="8.5" cy="8.5" r="2.3" fill="#f1f1f1"/></svg>
<div class="t" style="left:93px;top:180px;font-size:10.8px;color:#2e2e2e;letter-spacing:-0.15px">Document Settings</div>
<!-- folder -->
<svg class="a" style="left:62px;top:202px" width="18" height="15"><path d="M1 0.7H7.5L9 2H17V13.5H1Z" fill="#8c8c8c"/><path d="M1 1.4H7.2L8.6 2.6" fill="none" stroke="#aaa" stroke-width="0.7"/></svg>
<div class="t" style="left:93px;top:204px;font-size:10.8px;color:#2e2e2e;letter-spacing:-0.15px">Named Views</div>
<!-- origin -->
<svg class="a" style="left:62px;top:227px" width="17" height="12"><path d="M0.8 6Q8.5 -2.5 16.2 6Q8.5 14.5 0.8 6Z" fill="none" stroke="#a8a8a8" stroke-width="1.2"/><circle cx="8.5" cy="6" r="2.5" fill="none" stroke="#a8a8a8" stroke-width="1.1"/><path d="M3 0.5L14 11.5" stroke="#a8a8a8" stroke-width="1.2"/></svg>
<svg class="a" style="left:87px;top:226px" width="18" height="15"><path d="M1 0.7H7.5L9 2H17V13.5H1Z" fill="#8c8c8c"/><path d="M1 1.4H7.2L8.6 2.6" fill="none" stroke="#aaa" stroke-width="0.7"/></svg>
<div class="t" style="left:118px;top:228px;font-size:10.8px;color:#2e2e2e;letter-spacing:-0.15px">Origin</div>
<!-- sketches -->
<svg class="a" style="left:62px;top:251px" width="17" height="11"><path d="M0.5 5.5Q8.5 -4 16.5 5.5Q8.5 15 0.5 5.5Z" fill="#9d9d9d"/><circle cx="8.5" cy="5.5" r="3" fill="#f1f1f1"/><circle cx="8.5" cy="5.5" r="1.9" fill="#9d9d9d"/></svg>
<svg class="a" style="left:87px;top:250px" width="18" height="15"><path d="M1 0.7H7.5L9 2H17V13.5H1Z" fill="#8c8c8c"/><path d="M1 1.4H7.2L8.6 2.6" fill="none" stroke="#aaa" stroke-width="0.7"/></svg>
<div class="t" style="left:118px;top:252px;font-size:10.8px;color:#2e2e2e;letter-spacing:-0.15px">Sketches</div>
<!-- internal gear body -->
<svg class="a" style="left:62px;top:275px" width="17" height="11"><path d="M0.5 5.5Q8.5 -4 16.5 5.5Q8.5 15 0.5 5.5Z" fill="#9d9d9d"/><circle cx="8.5" cy="5.5" r="3" fill="#f1f1f1"/><circle cx="8.5" cy="5.5" r="1.9" fill="#9d9d9d"/></svg>
<svg class="a" style="left:87px;top:273px" width="18" height="17"><path d="M1.5 4.5L4.5 1.2H16.5V12.8L13.3 16H1.5Z" fill="#f6f6f7" stroke="#1e1e1e" stroke-width="1.1" stroke-linejoin="round"/><rect x="2.2" y="5.2" width="10.5" height="10.2" fill="#d8dce2"/><path d="M13.3 5.2L16 2.2V12.5L13.3 15.4Z" fill="#e6e8ec"/><path d="M13.3 4.5V16M13.3 4.5L16.5 1.2" fill="none" stroke="#1e1e1e" stroke-width="0.6" opacity="0.6"/></svg>
<div class="t" style="left:118px;top:276px;font-size:10.8px;color:#2e2e2e;letter-spacing:-0.15px">Internal Gear (240 teeth):1</div>
<!-- DIALOG -->
<div class="a" style="left:402px;top:185px;width:250px;height:600px;background:#f1f1f1;border:1px solid #c6c6c6"></div>
<div class="a" style="left:403px;top:209px;width:248px;height:1px;background:#c6c6c6"></div>
<svg class="a" style="left:407px;top:192px" width="11" height="11"><circle cx="5.3" cy="5.3" r="4.6" fill="#2a2a2a"/><path d="M2.8 5.3H7.8" stroke="#f1f1f1" stroke-width="1.4"/></svg>
<div class="t" style="left:427px;top:192px;font-size:10.5px;color:#5c5c5c;letter-spacing:-0.45px">FM GEARS</div>
<!-- tabs -->
<div class="a" style="left:403px;top:237px;width:67px;height:1px;background:#c6c6c6"></div>
<div class="a" style="left:469px;top:212px;width:79px;height:26px;border:1px solid #c6c6c6;border-bottom:none;background:#f1f1f1"></div>
<div class="a" style="left:547px;top:237px;width:104px;height:1px;background:#c6c6c6"></div>
<div class="a" style="left:614px;top:212px;width:1px;height:24px;background:#c6c6c6"></div>
<div class="t" style="left:410px;top:218px;font-size:11px;color:#3a3a3a;letter-spacing:-0.1px">Spur Gear</div>
<div class="t" style="left:476px;top:218px;font-size:11px;color:#3a3a3a;letter-spacing:-0.1px">Internal Gear</div>
<div class="t" style="left:554px;top:218px;font-size:11px;color:#3a3a3a;letter-spacing:-0.1px">Rack Gear</div>
<svg class="a" style="left:412px;top:241px" width="226" height="189">
<rect width="226" height="189" fill="#e1e1e1"/>
<path d="M8.1 0V189M0 180.5H226M16.8 0V189M0 171.8H226M25.5 0V189M0 163.1H226M34.2 0V189M0 154.4H226M42.9 0V189M0 145.7H226M51.6 0V189M0 137.0H226M60.3 0V189M0 128.3H226M69.0 0V189M0 119.6H226M77.7 0V189M0 110.9H226M86.4 0V189M0 102.2H226M95.1 0V189M0 93.5H226M103.8 0V189M0 84.8H226M112.5 0V189M0 76.1H226M121.2 0V189M0 67.4H226M129.9 0V189M0 58.7H226M138.6 0V189M0 50.0H226M147.3 0V189M0 41.3H226M156.0 0V189M0 32.6H226M164.7 0V189M0 23.9H226M173.4 0V189M0 15.2H226M182.1 0V189M0 6.5H226M190.8 0V189M199.5 0V189M208.2 0V189M216.9 0V189M225.6 0V189" stroke="#d3d3d3" stroke-width="0.6" fill="none"/>
<path d="M8.1 0V189M0 180.5H226M86.4 0V189M0 102.2H226M164.7 0V189M0 23.9H226" stroke="#c4c4c4" stroke-width="1" fill="none"/>
<path d="M133.60000000000002 180.5A125.3 125.3 0 1 0 -116.99999999999999 180.5A125.3 125.3 0 1 0 133.60000000000002 180.5ZM-5.8 96.2L-5.1 88.5L-2.8 80.1L-0.2 74.3L3.5 71.3L8.3 70.5L13.1 71.3L16.8 74.3L19.4 80.1L21.7 88.5L22.4 96.2L25.9 97.8L30.2 98.9L34.4 100.1L38.2 100.4L42.7 94.1L48.9 88.0L54.0 84.3L58.8 83.5L63.3 85.2L67.0 88.3L68.8 92.8L68.1 99.1L65.9 107.5L62.7 114.5L64.8 117.7L68.1 120.7L71.1 124.0L74.3 126.1L81.3 122.9L89.7 120.7L96.0 120.0L100.5 121.8L103.6 125.5L105.3 130.0L104.5 134.8L100.8 139.9L94.7 146.1L88.4 150.6L88.7 154.4L89.9 158.6L91.0 162.9L92.6 166.4L100.3 167.1L108.7 169.4L114.5 172.0L117.5 175.7L118.3 180.5L117.5 185.3L114.5 189.0L108.7 191.6L100.3 193.9L92.6 194.6L91.0 198.1L89.9 202.4L88.7 206.6L88.4 210.4L94.7 214.9L100.8 221.1L104.5 226.2L105.3 231.0L103.6 235.5L100.5 239.2L96.0 241.0L89.7 240.3L81.3 238.1L74.3 234.9L71.1 237.0L68.1 240.3L64.8 243.3L62.7 246.5L65.9 253.5L68.1 261.9L68.8 268.2L67.0 272.7L63.3 275.8L58.8 277.5L54.0 276.7L48.9 273.0L42.7 266.9L38.2 260.6L34.4 260.9L30.2 262.1L25.9 263.2L22.4 264.8L21.7 272.5L19.4 280.9L16.8 286.7L13.1 289.7L8.3 290.5L3.5 289.7L-0.2 286.7L-2.8 280.9L-5.1 272.5L-5.8 264.8L-9.3 263.2L-13.6 262.1L-17.8 260.9L-21.6 260.6L-26.1 266.9L-32.3 273.0L-37.4 276.7L-42.2 277.5L-46.7 275.8L-50.4 272.7L-52.2 268.2L-51.5 261.9L-49.3 253.5L-46.1 246.5L-48.2 243.3L-51.5 240.3L-54.5 237.0L-57.7 234.9L-64.7 238.1L-73.1 240.3L-79.4 241.0L-83.9 239.2L-87.0 235.5L-88.7 231.0L-87.9 226.2L-84.2 221.1L-78.1 214.9L-71.8 210.4L-72.1 206.6L-73.3 202.4L-74.4 198.1L-76.0 194.6L-83.7 193.9L-92.1 191.6L-97.9 189.0L-100.9 185.3L-101.7 180.5L-100.9 175.7L-97.9 172.0L-92.1 169.4L-83.7 167.1L-76.0 166.4L-74.4 162.9L-73.3 158.6L-72.1 154.4L-71.8 150.6L-78.1 146.1L-84.2 139.9L-87.9 134.8L-88.7 130.0L-87.0 125.5L-83.9 121.8L-79.4 120.0L-73.1 120.7L-64.7 122.9L-57.7 126.1L-54.5 124.0L-51.5 120.7L-48.2 117.7L-46.1 114.5L-49.3 107.5L-51.5 99.1L-52.2 92.8L-50.4 88.3L-46.7 85.2L-42.2 83.5L-37.4 84.3L-32.3 88.0L-26.1 94.1L-21.6 100.4L-17.8 100.1L-13.6 98.9L-9.3 97.8Z" fill="#aaaaaa" fill-rule="evenodd"/>
<path d="M133.60000000000002 180.5A125.3 125.3 0 1 0 -116.99999999999999 180.5A125.3 125.3 0 1 0 133.60000000000002 180.5Z" fill="none" stroke="#3d3d3d" stroke-width="1.3"/>
<path d="M-5.8 96.2L-5.1 88.5L-2.8 80.1L-0.2 74.3L3.5 71.3L8.3 70.5L13.1 71.3L16.8 74.3L19.4 80.1L21.7 88.5L22.4 96.2L25.9 97.8L30.2 98.9L34.4 100.1L38.2 100.4L42.7 94.1L48.9 88.0L54.0 84.3L58.8 83.5L63.3 85.2L67.0 88.3L68.8 92.8L68.1 99.1L65.9 107.5L62.7 114.5L64.8 117.7L68.1 120.7L71.1 124.0L74.3 126.1L81.3 122.9L89.7 120.7L96.0 120.0L100.5 121.8L103.6 125.5L105.3 130.0L104.5 134.8L100.8 139.9L94.7 146.1L88.4 150.6L88.7 154.4L89.9 158.6L91.0 162.9L92.6 166.4L100.3 167.1L108.7 169.4L114.5 172.0L117.5 175.7L118.3 180.5L117.5 185.3L114.5 189.0L108.7 191.6L100.3 193.9L92.6 194.6L91.0 198.1L89.9 202.4L88.7 206.6L88.4 210.4L94.7 214.9L100.8 221.1L104.5 226.2L105.3 231.0L103.6 235.5L100.5 239.2L96.0 241.0L89.7 240.3L81.3 238.1L74.3 234.9L71.1 237.0L68.1 240.3L64.8 243.3L62.7 246.5L65.9 253.5L68.1 261.9L68.8 268.2L67.0 272.7L63.3 275.8L58.8 277.5L54.0 276.7L48.9 273.0L42.7 266.9L38.2 260.6L34.4 260.9L30.2 262.1L25.9 263.2L22.4 264.8L21.7 272.5L19.4 280.9L16.8 286.7L13.1 289.7L8.3 290.5L3.5 289.7L-0.2 286.7L-2.8 280.9L-5.1 272.5L-5.8 264.8L-9.3 263.2L-13.6 262.1L-17.8 260.9L-21.6 260.6L-26.1 266.9L-32.3 273.0L-37.4 276.7L-42.2 277.5L-46.7 275.8L-50.4 272.7L-52.2 268.2L-51.5 261.9L-49.3 253.5L-46.1 246.5L-48.2 243.3L-51.5 240.3L-54.5 237.0L-57.7 234.9L-64.7 238.1L-73.1 240.3L-79.4 241.0L-83.9 239.2L-87.0 235.5L-88.7 231.0L-87.9 226.2L-84.2 221.1L-78.1 214.9L-71.8 210.4L-72.1 206.6L-73.3 202.4L-74.4 198.1L-76.0 194.6L-83.7 193.9L-92.1 191.6L-97.9 189.0L-100.9 185.3L-101.7 180.5L-100.9 175.7L-97.9 172.0L-92.1 169.4L-83.7 167.1L-76.0 166.4L-74.4 162.9L-73.3 158.6L-72.1 154.4L-71.8 150.6L-78.1 146.1L-84.2 139.9L-87.9 134.8L-88.7 130.0L-87.0 125.5L-83.9 121.8L-79.4 120.0L-73.1 120.7L-64.7 122.9L-57.7 126.1L-54.5 124.0L-51.5 120.7L-48.2 117.7L-46.1 114.5L-49.3 107.5L-51.5 99.1L-52.2 92.8L-50.4 88.3L-46.7 85.2L-42.2 83.5L-37.4 84.3L-32.3 88.0L-26.1 94.1L-21.6 100.4L-17.8 100.1L-13.6 98.9L-9.3 97.8Z" fill="none" stroke="#2d2d2d" stroke-width="1.1" stroke-linejoin="round"/>
<circle cx="8.300000000000011" cy="180.5" r="94" fill="none" stroke="#f020f0" stroke-width="1" stroke-dasharray="1.6,1.2"/>
<circle cx="-3.6999999999999886" cy="181.5" r="3.5" fill="none" stroke="#bbb" stroke-width="0.8"/>
<text x="35" y="29" font-family="Liberation Sans" font-size="15.9" fill="#111" stroke="#111" stroke-width="0.12">Module (Metric): ∝ Tooth Size</text>
<text x="35" y="51" font-family="Liberation Sans" font-size="15.9" fill="#111" stroke="#111" stroke-width="0.12">Diametral Pitch (English): ∝</text>
<text x="155.6" y="69.5" font-family="Liberation Sans" font-size="15.9" fill="#111" stroke="#111" stroke-width="0.12">1 / Tooth Size</text>
<text x="138.7" y="106.6" font-family="Liberation Sans" font-size="15.9" fill="#111" stroke="#111" stroke-width="0.12">Pitch Diameter</text>
<text x="175.6" y="133.4" font-family="Liberation Sans" font-size="15.9" fill="#111" stroke="#111" stroke-width="0.12">Outer</text>
<text x="180" y="152.6" font-family="Liberation Sans" font-size="15.9" fill="#111" stroke="#111" stroke-width="0.12">Diameter</text>
<path d="M134 103.5L101 126" stroke="#000" stroke-width="3.2"/><path d="M91 133L98 119L107 130Z" fill="#000"/>
<path d="M173 138.5L144 150" stroke="#000" stroke-width="3.2"/><path d="M132 155L141 144L147 157Z" fill="#000"/>
</svg>
<!-- form -->
<div class="t" style="left:415px;top:442px;font-size:11px;color:#2e2e2e;letter-spacing:-0.2px">Outer Diameter</div>
<div class="t" style="left:415px;top:472px;font-size:11px;color:#2e2e2e;letter-spacing:-0.2px">Pitch Diameter</div>
<div class="t" style="left:415px;top:502px;font-size:11px;color:#2e2e2e;letter-spacing:-0.2px">Standard</div>
<div class="t" style="left:415px;top:532px;font-size:11px;color:#2e2e2e;letter-spacing:-0.2px">Pressure Angle</div>
<div class="t" style="left:415px;top:562px;font-size:11px;color:#2e2e2e;letter-spacing:-0.2px">Module</div>
<div class="t" style="left:415px;top:592px;font-size:11px;color:#2e2e2e;letter-spacing:-0.2px">Number of Teeth</div>
<div class="t" style="left:415px;top:622px;font-size:11px;color:#2e2e2e;letter-spacing:-0.2px">Root Fillet Radius</div>
<div class="t" style="left:415px;top:652px;font-size:11px;color:#2e2e2e;letter-spacing:-0.2px">Clearance</div>
<div class="t" style="left:415px;top:682px;font-size:11px;color:#2e2e2e;letter-spacing:-0.2px">Gear Thickness</div>
<div class="a" style="left:511px;top:434px;width:108px;height:26px;background:#fff;border:1px solid #c8c8c8"></div>
<div class="t" style="left:514px;top:441px;font-size:11px;color:#222;letter-spacing:-0.2px">370.00 mm</div>
<div class="t" style="left:515px;top:469px;font-size:11px;color:#222;letter-spacing:-0.2px">324.72 mm</div>
<div class="a" style="left:511px;top:494px;width:108px;height:26px;background:#fcfcfc;border:1px solid #cdcdcd;border-radius:2px;box-shadow:inset 0 0 0 1px #ececec"></div>
<div class="t" style="left:518px;top:502px;font-size:11px;color:#222;letter-spacing:-0.2px">Metric</div>
<svg class="a" style="left:607px;top:505px" width="7" height="5"><path d="M0 0.5H7L3.5 4.5Z" fill="#222"/></svg>
<div class="a" style="left:511px;top:524px;width:108px;height:26px;background:#fcfcfc;border:1px solid #cdcdcd;border-radius:2px;box-shadow:inset 0 0 0 1px #ececec"></div>
<div class="t" style="left:518px;top:532px;font-size:11px;color:#222;letter-spacing:-0.2px">20 deg</div>
<svg class="a" style="left:607px;top:535px" width="7" height="5"><path d="M0 0.5H7L3.5 4.5Z" fill="#222"/></svg>
<div class="a" style="left:511px;top:554px;width:108px;height:26px;background:#fff;border:1px solid #c8c8c8"></div>
<div class="t" style="left:514px;top:561px;font-size:11px;color:#222;letter-spacing:-0.2px">1.353</div>
<div class="a" style="left:511px;top:584px;width:108px;height:26px;background:#fff;border:1px solid #c8c8c8"></div>
<div class="t" style="left:514px;top:591px;font-size:11px;color:#222;letter-spacing:-0.2px">240</div>
<div class="a" style="left:511px;top:614px;width:108px;height:26px;background:#fff;border:1px solid #c8c8c8"></div>
<div class="t" style="left:514px;top:621px;font-size:11px;color:#222;letter-spacing:-0.2px">0.20 mm</div>
<div class="a" style="left:511px;top:644px;width:108px;height:26px;background:#fff;border:1px solid #c8c8c8"></div>
<div class="t" style="left:514px;top:651px;font-size:11px;color:#222;letter-spacing:-0.2px">0.00 mm</div>
<div class="a" style="left:511px;top:674px;width:108px;height:26px;background:#fff;border:1px solid #c8c8c8"></div>
<div class="t" style="left:514px;top:681px;font-size:11px;color:#222;letter-spacing:-0.2px">3.90 mm</div>
<!-- footer -->
<div class="a" style="left:403px;top:748px;width:248px;height:1px;background:#c6c6c6"></div>
<div class="a" style="left:510px;top:757px;width:60px;height:19px;background:#e6e6e6;border:1px solid #b9b9b9"></div>
<div class="t" style="left:531px;top:761px;font-size:12px;color:#5a5a5a">OK</div>
<div class="a" style="left:580px;top:757px;width:60px;height:19px;background:#e6e6e6;border:1px solid #b9b9b9"></div>
<div class="t" style="left:590px;top:761px;font-size:12px;color:#4a4a4a;letter-spacing:0.15px">Cancel</div>
<!-- COMMENTS -->
<div class="a" style="left:6px;top:904px;width:300px;height:25px;background:#f1f1f1;border:1px solid #c9c9c9"></div>
<div class="t" style="left:31px;top:911px;font-size:10.5px;color:#5c5c5c;letter-spacing:-0.45px">COMMENTS</div>
<svg class="a" style="left:284px;top:911px" width="22" height="12"><circle cx="5.3" cy="5.3" r="4.6" fill="#2a2a2a"/><path d="M2.8 5.3H7.8M5.3 2.8V7.8" stroke="#f1f1f1" stroke-width="1.3"/><path d="M17.5 0.5V11M19.5 2.5V9" stroke="#666" stroke-width="1"/></svg>
<!-- nav toolbar -->
<div class="a" style="left:643px;top:905px;width:236px;height:23px;background:#f0f0f0"></div>
<svg class="a" style="left:643px;top:905px" width="236" height="23">
 <path d="M12 3.5Q7.5 3.5 7.5 11.5Q7.5 19.5 12 19.5" fill="none" stroke="#444" stroke-width="1"/>
 <path d="M12 3.5Q15.5 3.5 16.3 8M16.3 15Q15.5 19.5 12 19.5" fill="none" stroke="#444" stroke-width="1"/>
 <path d="M6 9.5Q2.5 11.5 5.5 14M18 9Q21 11 18.5 13.5" fill="none" stroke="#444" stroke-width="1"/>
 <path d="M16.5 6.5L16.3 9L14.5 8Z M16.5 16.5L16.3 14L14.5 15Z" fill="#444"/>
 <path d="M8.5 11.5H12.5M10.5 9.5V13.5" stroke="#1a86dd" stroke-width="1.2"/>
 <path d="M26.5 9.5H32L29.25 12.5Z" fill="#222"/>
 <path d="M36 9.5H52V20.5H36Z" fill="#f6f6f6" stroke="#444" stroke-width="1.1"/><rect x="39" y="12.5" width="10" height="4.5" fill="#aab2bc" stroke="#444" stroke-width="0.8"/><path d="M38 9L41 5.5L44.5 7.5L49.5 5" fill="none" stroke="#444" stroke-width="1"/>
 <path d="M66.5 20Q62.5 17.5 62 13.5Q62.5 11.5 64.5 12.5L65.5 14V6.5Q66.3 5 67.2 6.5V11.5M67.2 11V4.8Q68.1 3.4 69 4.8V11M69 11V5.3Q69.9 4 70.8 5.3V11.3M70.8 11.5V7.3Q71.7 6 72.6 7.3V14Q72.3 19.5 68.5 20Z" fill="#fafafa" stroke="#444" stroke-width="0.9" stroke-linejoin="round"/>
 <circle cx="94" cy="12.5" r="4.8" fill="#dfe9f3" stroke="#444" stroke-width="1.2"/><path d="M97.5 16L101 19.5" stroke="#333" stroke-width="2.4"/><path d="M101 6.5H106M103.5 4V9M101 10.5H106" stroke="#444" stroke-width="0.9"/>
 <circle cx="120.5" cy="11.5" r="5.8" fill="#f4f4f4" stroke="#444" stroke-width="1.3"/><rect x="118" y="9" width="5" height="5" fill="#fff" stroke="#444" stroke-width="0.9"/><path d="M124.5 15.5L128.5 19.5" stroke="#333" stroke-width="2.4"/>
 <path d="M135 9.5H141L138 12.5Z" fill="#222"/>
 <rect x="147.5" y="4.5" width="15" height="11.5" rx="1" fill="#9cb4d6" stroke="#444" stroke-width="1.1"/><path d="M152 19H158M155 16.5V19" stroke="#444" stroke-width="1.2"/>
 <path d="M165.5 9.5H171L168.25 12.5Z" fill="#222"/>
 <rect x="178" y="4.5" width="15.5" height="15" fill="#e4e4e4" stroke="#666" stroke-width="1"/><path d="M181.1 4.5V19.5M184.2 4.5V19.5M187.3 4.5V19.5M190.4 4.5V19.5M178 7.5H193.5M178 10.5H193.5M178 13.5H193.5M178 16.5H193.5" stroke="#777" stroke-width="0.9"/>
 <path d="M196.5 9.5H202L199.25 12.5Z" fill="#222"/>
 <rect x="209.5" y="5.5" width="6.5" height="5.5" rx="1" fill="#b9cde4" stroke="#3a5a8a" stroke-width="1"/><rect x="217.5" y="5.5" width="6.5" height="5.5" rx="1" fill="#b9cde4" stroke="#3a5a8a" stroke-width="1"/><rect x="209.5" y="12.5" width="6.5" height="5.5" rx="1" fill="#b9cde4" stroke="#3a5a8a" stroke-width="1"/><rect x="217.5" y="12.5" width="6.5" height="5.5" rx="1" fill="#b9cde4" stroke="#3a5a8a" stroke-width="1"/>
 <path d="M227.5 9.5H233L230.25 12.5Z" fill="#222"/>
</svg>
<!-- viewcube -->
<div class="a" style="left:1427px;top:150px;width:62px;height:62px;background:radial-gradient(closest-side,rgba(0,0,0,0.08),rgba(0,0,0,0))"></div>
<div class="a" style="left:1432px;top:154px;width:53px;height:53px;background:rgba(234,234,234,0.88);border:1px solid #8d8d8d;box-shadow:0 0 6px rgba(0,0,0,0.12)"></div>
<div class="a" style="left:1442px;top:164px;width:33px;height:33px;background:rgba(226,227,232,0.7)"></div>
<div class="t" style="left:1459px;top:180px;font-size:15px;font-weight:normal;color:#80838b;-webkit-text-stroke:0.5px #80838b;transform:translate(-50%,-50%) rotate(-90deg) scaleX(0.74);letter-spacing:0px">TOP</div>
<div class="t" style="left:1433.5px;top:138px;font-size:15px;color:#f87878;transform:scaleX(0.75);transform-origin:0 0">X</div>
<div class="t" style="left:1426px;top:201px;font-size:15px;color:#86ec86;transform:scaleX(0.75);transform-origin:0 0">Y</div>
<div class="t" style="left:1489px;top:194px;font-size:15px;color:#7c7cf8;transform:scaleX(0.78);transform-origin:0 0">Z</div>
<div class="a" style="left:1485px;top:201px;width:2px;height:2px;background:#7c7cf8"></div>
<div class="a" style="left:1436px;top:153px;width:2px;height:2px;background:#f87878"></div>
<!-- timeline -->
<div class="a" style="left:2px;top:933px;width:1520px;height:1px;background:#dcdcdc"></div>
<svg class="a" style="left:0;top:935px" width="210" height="48">
 <g fill="#4a4a4a">
 <rect x="13" y="16" width="2" height="14"/><path d="M25 16V30L15.5 23Z"/>
 <path d="M47 16V30L37.5 23Z"/><rect x="48" y="19.5" width="2" height="7"/>
 <path d="M63 15V31L75 23Z"/>
 <rect x="87" y="19.5" width="2" height="7"/><path d="M90 16V30L99.5 23Z"/>
 <path d="M113 16V30L122.5 23Z"/><rect x="123" y="16" width="2" height="14"/>
 </g>
 <path d="M151 15.5H160M149.5 17V26M151 27.5H155.5M161.5 17V21.5" fill="none" stroke="#444" stroke-width="1"/>
 <rect x="148" y="14" width="2" height="2" fill="#1a86dd"/><rect x="161" y="14" width="2" height="2" fill="#1a86dd"/><rect x="148" y="27" width="2" height="2" fill="#1a86dd"/>
 <path d="M157 29L163 23" stroke="#f5b93a" stroke-width="3"/><circle cx="163" cy="23" r="1.3" fill="#e33"/>
 <path d="M157 34V38.5H175" fill="none" stroke="#c9c9c9" stroke-width="2"/>
 <rect x="174" y="34" width="9" height="9" rx="1.5" fill="#bfc6cf" stroke="#8e96a0" stroke-width="0.8"/><path d="M178.5 35.5V41.5M175.5 38.5H181.5" stroke="#111" stroke-width="1.2"/>
 <g fill="#b5cde8" stroke="#1c3a66" stroke-width="1"><rect x="172.5" y="19.5" width="3" height="6"/><rect x="178.5" y="19.5" width="3" height="6"/><rect x="184.5" y="19.5" width="3" height="6"/></g>
 <path d="M186 8H198V11L193.5 16.5V40H191V16.5L186 11Z" fill="#666"/>
</svg>
<svg class="a" style="left:1492px;top:949px" width="18" height="18"><g fill="#8a8a8a"><circle cx="9" cy="9" r="5.8"/><rect x="7.5" y="1" width="3" height="16"/><rect x="1" y="7.5" width="16" height="3"/><rect x="7.5" y="1" width="3" height="16" transform="rotate(45 9 9)"/><rect x="7.5" y="1" width="3" height="16" transform="rotate(-45 9 9)"/></g><circle cx="9" cy="9" r="2.4" fill="#f1f1f1"/></svg>
<!-- text commands -->
<div class="a" style="left:2px;top:983px;width:1520px;height:1px;background:#d0d0d0"></div><div class="a" style="left:2px;top:983px;width:1px;height:120px;background:#d0d0d0"></div>
<svg class="a" style="left:7px;top:990px" width="11" height="11"><circle cx="5.3" cy="5.3" r="4.6" fill="#2a2a2a"/><path d="M2.8 5.3H7.8" stroke="#f1f1f1" stroke-width="1.4"/></svg>
<div class="t" style="left:27px;top:990px;font-size:10.5px;color:#5c5c5c;letter-spacing:-0.32px">TEXT COMMANDS</div>
<div class="a" style="left:4px;top:1007px;width:1516px;height:96px;background:#fff;border:1px solid #7d7d7d;border-bottom:none"></div>
</body></html>
